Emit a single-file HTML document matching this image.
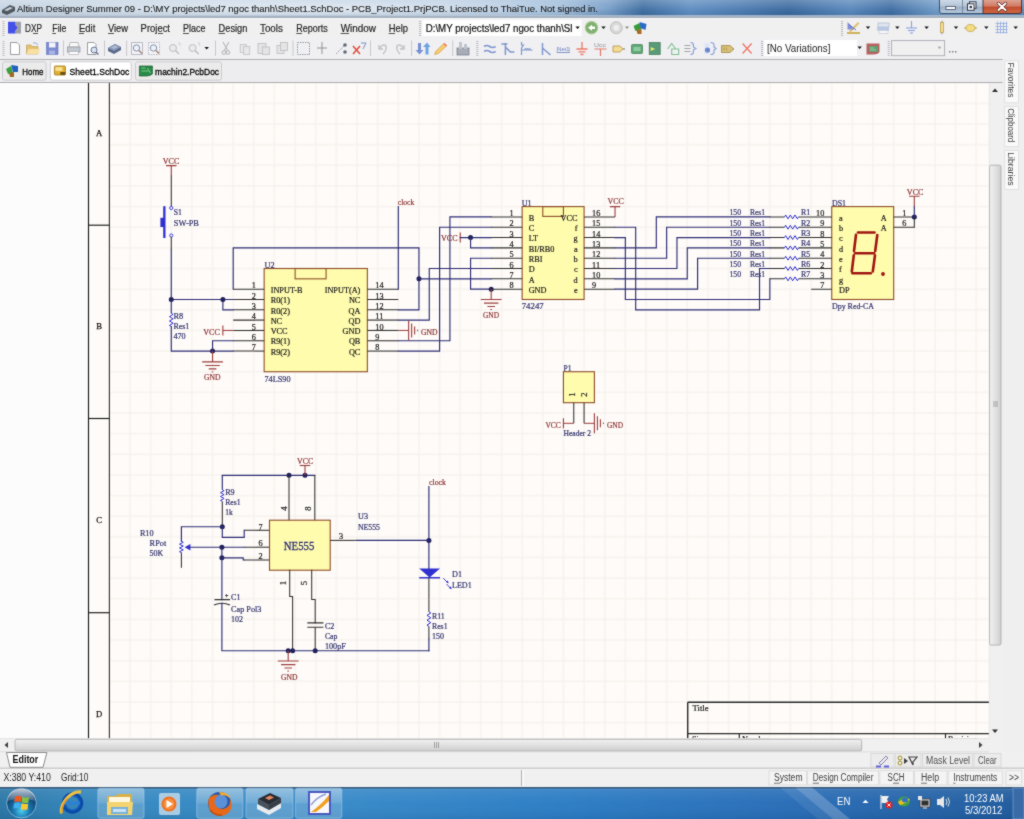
<!DOCTYPE html>
<html><head><meta charset="utf-8"><title>Altium Designer</title>
<style>html,body{margin:0;padding:0;width:1024px;height:819px;overflow:hidden;background:#f0f0f0;font-family:"Liberation Sans",sans-serif;}
svg{display:block;}</style></head>
<body><svg width="1024" height="819" viewBox="0 0 1024 819">
<defs><filter id="fSoft" x="0" y="0" width="1024" height="819" filterUnits="userSpaceOnUse" color-interpolation-filters="sRGB"><feConvolveMatrix order="3" kernelMatrix="1 2 1 2 18 2 1 2 1" divisor="30" edgeMode="duplicate" preserveAlpha="true"/></filter></defs>
<g filter="url(#fSoft)">
<rect x="0" y="0" width="1024" height="819" fill="#f0f0f0"/>
<defs>
<linearGradient id="gTitle" x1="0" y1="0" x2="1" y2="0">
 <stop offset="0" stop-color="#c4d3e2"/>
 <stop offset="0.254" stop-color="#c2d3e4"/>
 <stop offset="0.44" stop-color="#b2c9e0"/>
 <stop offset="0.55" stop-color="#98b8d8"/>
 <stop offset="0.595" stop-color="#6f98c4"/>
 <stop offset="0.628" stop-color="#3a6a9e"/>
 <stop offset="0.674" stop-color="#5a8abf"/>
 <stop offset="0.72" stop-color="#4a7ab0"/>
 <stop offset="0.77" stop-color="#36669c"/>
 <stop offset="0.83" stop-color="#5484b9"/>
 <stop offset="0.87" stop-color="#3a6aa0"/>
 <stop offset="0.913" stop-color="#6a96c4"/>
 <stop offset="1" stop-color="#5a88bb"/>
</linearGradient>
<linearGradient id="gTitleV" x1="0" y1="0" x2="0" y2="1">
 <stop offset="0" stop-color="#ffffff" stop-opacity="0.25"/>
 <stop offset="0.6" stop-color="#ffffff" stop-opacity="0.05"/>
 <stop offset="1" stop-color="#000000" stop-opacity="0.05"/>
</linearGradient>
<radialGradient id="gGlow" cx="0.5" cy="0.5" r="0.5">
 <stop offset="0" stop-color="#e8eef5" stop-opacity="0.9"/>
 <stop offset="1" stop-color="#e8eef5" stop-opacity="0"/>
</radialGradient>
<linearGradient id="gClose" x1="0" y1="0" x2="0" y2="1">
 <stop offset="0" stop-color="#e0a898"/>
 <stop offset="0.5" stop-color="#d07a64"/>
 <stop offset="0.55" stop-color="#c04a2c"/>
 <stop offset="1" stop-color="#d06a48"/>
</linearGradient>
<linearGradient id="gBtn" x1="0" y1="0" x2="0" y2="1">
 <stop offset="0" stop-color="#d0dcea"/>
 <stop offset="0.5" stop-color="#b4c4d6"/>
 <stop offset="0.55" stop-color="#98acc4"/>
 <stop offset="1" stop-color="#b8cce0"/>
</linearGradient>
<linearGradient id="gMenu" x1="0" y1="0" x2="0" y2="1">
 <stop offset="0" stop-color="#f5f5f8"/>
 <stop offset="1" stop-color="#ececf0"/>
</linearGradient>
<linearGradient id="gThumbV" x1="0" y1="0" x2="1" y2="0">
 <stop offset="0" stop-color="#f2f2f2"/>
 <stop offset="0.5" stop-color="#e2e2e2"/>
 <stop offset="1" stop-color="#cfcfcf"/>
</linearGradient>
<linearGradient id="gThumbH" x1="0" y1="0" x2="0" y2="1">
 <stop offset="0" stop-color="#f2f2f2"/>
 <stop offset="0.5" stop-color="#e0e0e0"/>
 <stop offset="1" stop-color="#cdcdcd"/>
</linearGradient>
<linearGradient id="gTask" x1="0" y1="0" x2="1" y2="0">
 <stop offset="0" stop-color="#2a76a6"/>
 <stop offset="0.1" stop-color="#3488c0"/>
 <stop offset="0.33" stop-color="#3689c8"/>
 <stop offset="0.55" stop-color="#2b7cc4"/>
 <stop offset="0.78" stop-color="#286cb6"/>
 <stop offset="1" stop-color="#1f5a9c"/>
</linearGradient>
<linearGradient id="gTaskV" x1="0" y1="0" x2="0" y2="1">
 <stop offset="0" stop-color="#ffffff" stop-opacity="0.10"/>
 <stop offset="0.5" stop-color="#ffffff" stop-opacity="0.02"/>
 <stop offset="1" stop-color="#000000" stop-opacity="0.06"/>
</linearGradient>
<linearGradient id="gTaskBtn" x1="0" y1="0" x2="0" y2="1">
 <stop offset="0" stop-color="#ffffff" stop-opacity="0.42"/>
 <stop offset="0.5" stop-color="#ffffff" stop-opacity="0.26"/>
 <stop offset="0.52" stop-color="#ffffff" stop-opacity="0.18"/>
 <stop offset="1" stop-color="#ffffff" stop-opacity="0.2"/>
</linearGradient>
<radialGradient id="gOrb" cx="0.5" cy="0.75" r="0.6">
 <stop offset="0" stop-color="#50d0f0"/>
 <stop offset="0.45" stop-color="#1a78b0"/>
 <stop offset="1" stop-color="#0e3a68"/>
</radialGradient>
<linearGradient id="gOrbTop" x1="0" y1="0" x2="0" y2="1">
 <stop offset="0" stop-color="#ffffff" stop-opacity="0.75"/>
 <stop offset="1" stop-color="#ffffff" stop-opacity="0.15"/>
</linearGradient>
<radialGradient id="gIE" cx="0.5" cy="0.5" r="0.5">
 <stop offset="0" stop-color="#a0e8ff"/>
 <stop offset="0.5" stop-color="#2a90e0"/>
 <stop offset="1" stop-color="#0a4aa8"/>
</radialGradient>
<clipPath id="cCanvas"><rect x="109.5" y="83" width="879.5" height="655.5"/></clipPath>
<pattern id="pGrid" x="130" y="103.4" width="20.64" height="20.64" patternUnits="userSpaceOnUse">
 <rect x="0" y="0" width="20.64" height="20.64" fill="#fefbf8"/>
 <rect x="-0.5" y="0" width="1" height="20.64" fill="#f4f0eb"/>
 <rect x="0" y="-0.5" width="20.64" height="1" fill="#f4f0eb"/>
 <rect x="20.14" y="0" width="1" height="20.64" fill="#f4f0eb"/>
 <rect x="0" y="20.14" width="20.64" height="1" fill="#f4f0eb"/>
</pattern>
</defs>
<rect x="0.00" y="0.00" width="1024.00" height="15.50" fill="url(#gTitle)"/>
<rect x="0.00" y="0.00" width="1024.00" height="15.50" fill="url(#gTitleV)"/>
<ellipse cx="310" cy="8.5" rx="310" ry="11" fill="url(#gGlow)"/>
<rect x="0.00" y="15.50" width="1024.00" height="1.20" fill="#a2b4ca"/>
<rect x="0.00" y="16.70" width="1024.00" height="1.10" fill="#7a8898"/>
<rect x="0.00" y="17.80" width="1024.00" height="1.00" fill="#fafcff"/>
<g transform="translate(1,2)"><path d="M1 8 L9 3 L14 5 L14 9 L6 13 L1 11 Z" fill="#505860"/><path d="M3 8 L9 5 L12 6 L6 9 Z" fill="#c8d0d8"/></g>
<text x="17.00" y="12.20" font-size="9.8" fill="#1a1a1a" font-family="'Liberation Sans', sans-serif" textLength="581.00" lengthAdjust="spacingAndGlyphs" stroke="#1a1a1a" stroke-width="0.12">Altium Designer Summer 09 - D:\MY projects\led7 ngoc thanh\Sheet1.SchDoc - PCB_Project1.PrjPCB. Licensed to ThaiTue. Not signed in.</text>
<path d="M939.5 -1 L939.5 11 Q939.5 13.5 942 13.5 L1019 13.5 Q1021.5 13.5 1021.5 11 L1021.5 -1 Z" fill="url(#gBtn)" stroke="#34465e" stroke-width="0.9"/>
<path d="M983 -1 L983 13.5 L1019 13.5 Q1021.5 13.5 1021.5 11 L1021.5 -1 Z" fill="url(#gClose)" stroke="#4a2a28" stroke-width="0.9"/>
<line x1="962.50" y1="0.00" x2="962.50" y2="13.50" stroke="#6a7a90" stroke-width="0.8" />
<rect x="946.00" y="6.50" width="9.50" height="3.00" fill="#ffffff" stroke="#3a4a62" stroke-width="0.8"/>
<rect x="969.50" y="1.80" width="6.50" height="6.50" fill="#ffffff" stroke="#2a3446" stroke-width="1.0"/>
<rect x="967.50" y="3.80" width="6.50" height="6.50" fill="#ffffff" stroke="#2a3446" stroke-width="1.0"/>
<rect x="969.60" y="5.90" width="2.30" height="2.30" fill="#2a3446"/>
<path d="M998.5 3.5 L1005.5 10 M1005.5 3.5 L998.5 10" stroke="#5a2a22" stroke-width="3.4" stroke-linecap="round"/>
<path d="M998.5 3.5 L1005.5 10 M1005.5 3.5 L998.5 10" stroke="#ffffff" stroke-width="2" stroke-linecap="round"/>
<rect x="0.00" y="18.80" width="1024.00" height="19.20" fill="#f0f0f0"/>
<rect x="2.50" y="21.00" width="2.00" height="1.00" fill="#b8b8c0"/>
<rect x="2.50" y="23.00" width="2.00" height="1.00" fill="#b8b8c0"/>
<rect x="2.50" y="25.00" width="2.00" height="1.00" fill="#b8b8c0"/>
<rect x="2.50" y="27.00" width="2.00" height="1.00" fill="#b8b8c0"/>
<rect x="2.50" y="29.00" width="2.00" height="1.00" fill="#b8b8c0"/>
<rect x="2.50" y="31.00" width="2.00" height="1.00" fill="#b8b8c0"/>
<rect x="2.50" y="33.00" width="2.00" height="1.00" fill="#b8b8c0"/>
<rect x="2.50" y="35.00" width="2.00" height="1.00" fill="#b8b8c0"/>
<path d="M8 21.8 L15.6 21.8 L15.6 25 L18 27.7 L15.6 30.4 L15.6 33.6 L8 33.6 Z" fill="#4450e8"/>
<path d="M15.6 21.8 L21 21.8 L21 33.6 L15.6 33.6 L15.6 30.4 L18 27.7 L15.6 25 Z" fill="#a0a0a8"/>
<text x="25.00" y="31.50" font-size="10.2" fill="#1e1e1e" font-family="'Liberation Sans', sans-serif" textLength="17.00" lengthAdjust="spacingAndGlyphs" stroke="#1e1e1e" stroke-width="0.18">DXP</text>
<text x="52.30" y="31.50" font-size="10.2" fill="#1e1e1e" font-family="'Liberation Sans', sans-serif" textLength="14.10" lengthAdjust="spacingAndGlyphs" stroke="#1e1e1e" stroke-width="0.18">File</text>
<text x="79.00" y="31.50" font-size="10.2" fill="#1e1e1e" font-family="'Liberation Sans', sans-serif" textLength="16.30" lengthAdjust="spacingAndGlyphs" stroke="#1e1e1e" stroke-width="0.18">Edit</text>
<text x="108.00" y="31.50" font-size="10.2" fill="#1e1e1e" font-family="'Liberation Sans', sans-serif" textLength="20.00" lengthAdjust="spacingAndGlyphs" stroke="#1e1e1e" stroke-width="0.18">View</text>
<text x="140.60" y="31.50" font-size="10.2" fill="#1e1e1e" font-family="'Liberation Sans', sans-serif" textLength="29.40" lengthAdjust="spacingAndGlyphs" stroke="#1e1e1e" stroke-width="0.18">Project</text>
<text x="183.00" y="31.50" font-size="10.2" fill="#1e1e1e" font-family="'Liberation Sans', sans-serif" textLength="22.40" lengthAdjust="spacingAndGlyphs" stroke="#1e1e1e" stroke-width="0.18">Place</text>
<text x="218.60" y="31.50" font-size="10.2" fill="#1e1e1e" font-family="'Liberation Sans', sans-serif" textLength="28.70" lengthAdjust="spacingAndGlyphs" stroke="#1e1e1e" stroke-width="0.18">Design</text>
<text x="260.00" y="31.50" font-size="10.2" fill="#1e1e1e" font-family="'Liberation Sans', sans-serif" textLength="22.80" lengthAdjust="spacingAndGlyphs" stroke="#1e1e1e" stroke-width="0.18">Tools</text>
<text x="296.30" y="31.50" font-size="10.2" fill="#1e1e1e" font-family="'Liberation Sans', sans-serif" textLength="31.50" lengthAdjust="spacingAndGlyphs" stroke="#1e1e1e" stroke-width="0.18">Reports</text>
<text x="340.70" y="31.50" font-size="10.2" fill="#1e1e1e" font-family="'Liberation Sans', sans-serif" textLength="35.30" lengthAdjust="spacingAndGlyphs" stroke="#1e1e1e" stroke-width="0.18">Window</text>
<text x="388.70" y="31.50" font-size="10.2" fill="#1e1e1e" font-family="'Liberation Sans', sans-serif" textLength="19.30" lengthAdjust="spacingAndGlyphs" stroke="#1e1e1e" stroke-width="0.18">Help</text>
<line x1="33.00" y1="33.50" x2="38.00" y2="33.50" stroke="#2a2a2a" stroke-width="0.8" />
<line x1="52.30" y1="33.50" x2="56.00" y2="33.50" stroke="#2a2a2a" stroke-width="0.8" />
<line x1="79.00" y1="33.50" x2="84.00" y2="33.50" stroke="#2a2a2a" stroke-width="0.8" />
<line x1="108.00" y1="33.50" x2="114.00" y2="33.50" stroke="#2a2a2a" stroke-width="0.8" />
<line x1="158.00" y1="33.50" x2="163.00" y2="33.50" stroke="#2a2a2a" stroke-width="0.8" />
<line x1="183.00" y1="33.50" x2="189.00" y2="33.50" stroke="#2a2a2a" stroke-width="0.8" />
<line x1="218.60" y1="33.50" x2="225.00" y2="33.50" stroke="#2a2a2a" stroke-width="0.8" />
<line x1="260.00" y1="33.50" x2="265.00" y2="33.50" stroke="#2a2a2a" stroke-width="0.8" />
<line x1="296.30" y1="33.50" x2="302.00" y2="33.50" stroke="#2a2a2a" stroke-width="0.8" />
<line x1="340.70" y1="33.50" x2="349.00" y2="33.50" stroke="#2a2a2a" stroke-width="0.8" />
<line x1="388.70" y1="33.50" x2="395.00" y2="33.50" stroke="#2a2a2a" stroke-width="0.8" />
<rect x="419.00" y="21.00" width="2.00" height="1.00" fill="#b8b8c0"/>
<rect x="419.00" y="23.00" width="2.00" height="1.00" fill="#b8b8c0"/>
<rect x="419.00" y="25.00" width="2.00" height="1.00" fill="#b8b8c0"/>
<rect x="419.00" y="27.00" width="2.00" height="1.00" fill="#b8b8c0"/>
<rect x="419.00" y="29.00" width="2.00" height="1.00" fill="#b8b8c0"/>
<rect x="419.00" y="31.00" width="2.00" height="1.00" fill="#b8b8c0"/>
<rect x="419.00" y="33.00" width="2.00" height="1.00" fill="#b8b8c0"/>
<rect x="419.00" y="35.00" width="2.00" height="1.00" fill="#b8b8c0"/>
<rect x="422.50" y="20.00" width="159.00" height="16.00" fill="#ffffff"/>
<text x="425.70" y="31.50" font-size="10.2" fill="#101010" font-family="'Liberation Sans', sans-serif" textLength="146.80" lengthAdjust="spacingAndGlyphs" stroke="#101010" stroke-width="0.2">D:\MY projects\led7 ngoc thanh\Sl</text>
<path d="M575.4 26.4 L579.8 26.4 L577.6 28.9 Z" fill="#101010"/>
<circle cx="591.5" cy="27.7" r="6.3" fill="#80b070" stroke="#b0d0a0" stroke-width="1"/>
<path d="M588 27.7 L592 24.7 L592 26.5 L595 26.5 L595 29 L592 29 L592 30.7 Z" fill="#ffffff"/>
<path d="M601.3 26.4 L605.7 26.4 L603.5 28.9 Z" fill="#101010"/>
<circle cx="616.3" cy="27.7" r="6" fill="#d8d8d8" stroke="#c0c0c0" stroke-width="1"/>
<circle cx="616.3" cy="27.7" r="3" fill="#eeeeee"/>
<path d="M624.8 26.4 L629.2 26.4 L627.0 28.9 Z" fill="#909090"/>
<g transform="translate(633.5,21)"><path d="M0 5 L6 2 L8 8 L2 10 Z" fill="#3a9a3a"/><path d="M6 1 L13 3 L12 9 L7 7 Z" fill="#2a6ac8"/><path d="M3 9 L8 8 L8 13 L4 13 Z" fill="#a86a20"/></g>
<rect x="841.00" y="21.00" width="2.00" height="1.00" fill="#b8b8c0"/>
<rect x="841.00" y="23.00" width="2.00" height="1.00" fill="#b8b8c0"/>
<rect x="841.00" y="25.00" width="2.00" height="1.00" fill="#b8b8c0"/>
<rect x="841.00" y="27.00" width="2.00" height="1.00" fill="#b8b8c0"/>
<rect x="841.00" y="29.00" width="2.00" height="1.00" fill="#b8b8c0"/>
<rect x="841.00" y="31.00" width="2.00" height="1.00" fill="#b8b8c0"/>
<rect x="841.00" y="33.00" width="2.00" height="1.00" fill="#b8b8c0"/>
<rect x="841.00" y="35.00" width="2.00" height="1.00" fill="#b8b8c0"/>
<g transform="translate(847,21)"><path d="M0 11 L13 11 L13 13 L0 13 Z" fill="#d0b060"/><path d="M2 10 L11 1 L12.5 2.5 L3.5 11.5 Z" fill="#e0c070"/><path d="M0.5 1 L7 8.5 L0.5 8.5 Z" fill="#8090d8"/><path d="M1.5 3 L9 9" stroke="#6070c0" stroke-width="1"/></g>
<path d="M865.8 26.4 L870.2 26.4 L868.0 28.9 Z" fill="#101010"/>
<g transform="translate(877,21)"><rect x="1" y="2" width="11" height="4" fill="#e0e6f0" stroke="#a0acc8" stroke-width="0.6"/><rect x="0" y="6" width="12" height="3.5" fill="#b8c8e4"/><rect x="2" y="9.5" width="9" height="3" fill="#f8f8f8" stroke="#b0b8c8" stroke-width="0.5"/></g>
<path d="M895.1 26.4 L899.5 26.4 L897.3 28.9 Z" fill="#101010"/>
<g transform="translate(905,20)" stroke="#8aa2dc" stroke-width="1.1"><path d="M6.5 1 L6.5 8"/><path d="M1 8 L12 8"/><path d="M3 10.5 L10 10.5"/><path d="M5 13 L8 13"/></g>
<path d="M924.4 26.4 L928.8 26.4 L926.6 28.9 Z" fill="#101010"/>
<g transform="translate(939,20)"><rect x="1.5" y="2.5" width="3" height="10" fill="#f4dc90" stroke="#c0a050" stroke-width="0.8"/><path d="M3 0.5 L3 2.5 M3 12.5 L3 14.5" stroke="#808080" stroke-width="0.8"/></g>
<path d="M953.8 26.4 L958.2 26.4 L956.0 28.9 Z" fill="#101010"/>
<g transform="translate(964,21)"><path d="M0 7 L13 7" stroke="#c0a050" stroke-width="1"/><ellipse cx="6.5" cy="7" rx="4.5" ry="3.5" fill="#f4dc80" stroke="#c0a050" stroke-width="0.8"/></g>
<path d="M984.1 26.4 L988.5 26.4 L986.3 28.9 Z" fill="#101010"/>
<g transform="translate(995,21)" stroke="#9ab0e0" stroke-width="0.9"><path d="M2.5 0.5 L2.5 12.5 M5.5 0.5 L5.5 12.5 M8.5 0.5 L8.5 12.5 M11.5 0.5 L11.5 12.5 M0.5 2.5 L12.5 2.5 M0.5 5.5 L12.5 5.5 M0.5 8.5 L12.5 8.5 M0.5 11.5 L12.5 11.5"/></g>
<path d="M1013.5 26.4 L1017.9 26.4 L1015.7 28.9 Z" fill="#101010"/>
<rect x="0.00" y="38.00" width="1024.00" height="21.00" fill="#f0f0f3"/>
<line x1="0.00" y1="59.50" x2="1003.00" y2="59.50" stroke="#b0b0b4" stroke-width="1" />
<rect x="2.50" y="41.00" width="2.00" height="1.00" fill="#b8b8c0"/>
<rect x="2.50" y="43.00" width="2.00" height="1.00" fill="#b8b8c0"/>
<rect x="2.50" y="45.00" width="2.00" height="1.00" fill="#b8b8c0"/>
<rect x="2.50" y="47.00" width="2.00" height="1.00" fill="#b8b8c0"/>
<rect x="2.50" y="49.00" width="2.00" height="1.00" fill="#b8b8c0"/>
<rect x="2.50" y="51.00" width="2.00" height="1.00" fill="#b8b8c0"/>
<rect x="2.50" y="53.00" width="2.00" height="1.00" fill="#b8b8c0"/>
<rect x="2.50" y="55.00" width="2.00" height="1.00" fill="#b8b8c0"/>
<g transform="translate(10,42)"><path d="M0.5 0.5 L7 0.5 L9.5 3 L9.5 12.5 L0.5 12.5 Z" fill="#ffffff" stroke="#909098" stroke-width="0.9"/></g>
<g transform="translate(26,42)"><path d="M0.5 3 L5 3 L6 4.5 L12 4.5 L12 12 L0.5 12 Z" fill="#e4c070" stroke="#c09850" stroke-width="0.6"/><path d="M2.5 7 L14 7 L12 12 L0.5 12 Z" fill="#f8e0a0"/><path d="M7 1 Q11 0 12 3" stroke="#80a0c0" stroke-width="0.8" fill="none"/></g>
<g transform="translate(46,42)"><rect x="0.5" y="0.5" width="11.5" height="12" fill="#7c8ad0" stroke="#6070b8" stroke-width="0.6"/><rect x="3" y="0.5" width="6.5" height="5" fill="#f4f4fa"/><rect x="3" y="8.5" width="6" height="4" fill="#a8b4e4"/></g>
<line x1="63.50" y1="40.50" x2="63.50" y2="56.00" stroke="#c8c8cc" stroke-width="1" />
<g transform="translate(67,42)"><path d="M3 0.5 L11 0.5 L12 5 L2 5 Z" fill="#fafafa" stroke="#a0a0a8" stroke-width="0.7"/><rect x="0.5" y="5" width="12.5" height="5" fill="#c4c8d0" stroke="#90949c" stroke-width="0.7"/><rect x="2" y="9.5" width="9.5" height="3" fill="#ffffff" stroke="#a0a0a8" stroke-width="0.6"/></g>
<g transform="translate(87,42)"><path d="M0.5 0.5 L7 0.5 L9 2.5 L9 12.5 L0.5 12.5 Z" fill="#ffffff" stroke="#909098" stroke-width="0.9"/><circle cx="7" cy="8" r="3" fill="#d8e4f4" stroke="#6a7890" stroke-width="1"/><path d="M9 10 L11.5 12.5" stroke="#6a7890" stroke-width="1.5"/></g>
<line x1="104.50" y1="40.50" x2="104.50" y2="56.00" stroke="#c8c8cc" stroke-width="1" />
<g transform="translate(108,42)"><path d="M0 6 L7 2 L13 5 L13 8 L6 12 L0 9 Z" fill="#5a6a88"/><path d="M0 6 L7 2 L13 5 L6 9 Z" fill="#8a9ab8"/><path d="M3 5.5 L7 3.5 L10 5 L6 7 Z" fill="#b0bcd4"/></g>
<line x1="126.60" y1="40.50" x2="126.60" y2="56.00" stroke="#c8c8cc" stroke-width="1" />
<g transform="translate(131,42)"><rect x="0.5" y="0.5" width="11" height="12" fill="#f4f4f8" stroke="#a8a8b4" stroke-width="0.8" stroke-dasharray="20,0"/><circle cx="5.5" cy="6" r="3.2" fill="#eef2f8" stroke="#8090a8" stroke-width="1"/><path d="M8 8.5 L11 11.5" stroke="#a08068" stroke-width="1.4"/></g>
<g transform="translate(148,42)"><rect x="0.5" y="0.5" width="11" height="12" fill="#f4f4f8" stroke="#a8a8b4" stroke-width="0.8" stroke-dasharray="1.5,1"/><circle cx="5.5" cy="6" r="3.2" fill="#eef2f8" stroke="#8090a8" stroke-width="1"/><path d="M8 8.5 L11 11.5" stroke="#a08068" stroke-width="1.4"/></g>
<g transform="translate(168,42)" opacity="0.6"><circle cx="5" cy="6" r="3.5" fill="#e8e8e8" stroke="#9a9aa0" stroke-width="1"/><path d="M7.5 8.5 L11 12" stroke="#a0a0a0" stroke-width="1.6"/><path d="M10 1 L12 1 L12 4" stroke="#b0b0b0" stroke-width="0.8" fill="none"/></g>
<g transform="translate(187.6,42)" opacity="0.6"><circle cx="5" cy="6" r="3.5" fill="#e8e8e8" stroke="#9a9aa0" stroke-width="1"/><path d="M7.5 8.5 L11 12" stroke="#a0a0a0" stroke-width="1.6"/><path d="M10 1 L12 1 L12 4" stroke="#b0b0b0" stroke-width="0.8" fill="none"/></g>
<path d="M204.5 46.9 L208.9 46.9 L206.7 49.4 Z" fill="#101010"/>
<line x1="215.50" y1="40.50" x2="215.50" y2="56.00" stroke="#c8c8cc" stroke-width="1" />
<g transform="translate(222,42)" stroke="#b8b8b8" stroke-width="1.1" fill="none"><path d="M1 0 L6 9 M7 0 L2 9"/><circle cx="2" cy="10.5" r="1.8"/><circle cx="6" cy="10.5" r="1.8"/></g>
<g transform="translate(239.7,42)" fill="#e8e8e8" stroke="#c0c0c0" stroke-width="0.8"><rect x="0.5" y="2.5" width="6" height="8"/><rect x="4" y="4.5" width="6" height="8"/></g>
<g transform="translate(257.5,42)" fill="#e4e4e4" stroke="#bcbcbc" stroke-width="0.8"><rect x="0.5" y="1.5" width="8" height="10"/><rect x="5" y="5" width="7" height="7.5"/></g>
<g transform="translate(276.5,42)" fill="#e4e4e4" stroke="#bcbcbc" stroke-width="0.8"><rect x="0.5" y="3.5" width="7" height="8"/><rect x="4" y="0.5" width="7" height="8"/></g>
<line x1="293.00" y1="40.50" x2="293.00" y2="56.00" stroke="#c8c8cc" stroke-width="1" />
<g transform="translate(297,42)"><rect x="0.5" y="0.5" width="12" height="12" fill="none" stroke="#8890a0" stroke-width="0.9" stroke-dasharray="1.5,1"/></g>
<g transform="translate(317,42)" stroke="#909098" stroke-width="1"><path d="M5 0 L5 12 M0 6 L10 6"/></g>
<g transform="translate(336,42)"><path d="M0 12 L8 4" stroke="#9098a8" stroke-width="1" stroke-dasharray="1.5,1"/><circle cx="9" cy="3" r="1.8" fill="#606878"/><circle cx="9" cy="10" r="1.8" fill="#606878"/></g>
<g transform="translate(353,42)"><path d="M0 4 L7 12 M7 4 L0 12" stroke="#e05040" stroke-width="1.6"/><path d="M8 1 L13 1 L10 7" stroke="#7a90c0" stroke-width="1" fill="none"/></g>
<line x1="370.50" y1="40.50" x2="370.50" y2="56.00" stroke="#c8c8cc" stroke-width="1" />
<g transform="translate(377,42)" stroke="#c0c0c8" stroke-width="1.4" fill="none"><path d="M2 3 L2 7 L6 7"/><path d="M2.5 6.5 Q6 1 9 4 Q10 8 6 12"/></g>
<g transform="translate(396,42)" stroke="#c0c0c8" stroke-width="1.4" fill="none"><path d="M8 3 L8 7 L4 7"/><path d="M7.5 6.5 Q4 1 1 4 Q0 8 4 12"/></g>
<line x1="411.60" y1="40.50" x2="411.60" y2="56.00" stroke="#c8c8cc" stroke-width="1" />
<g transform="translate(415,42)"><path d="M3 1 L3 8 L0.5 8 L4.5 12.5 L8.5 8 L6 8 L6 1 Z" fill="#7890d4"/><path d="M10.5 12.5 L10.5 5 L8 5 L12 0.5 L15.5 5 L13.5 5 L13.5 12.5 Z" fill="#6aa4e4"/></g>
<g transform="translate(434,42)"><path d="M0.5 12.5 L2 9 L10 1.5 L12.5 4 L4.5 11.5 Z" fill="#f4cc70" stroke="#d09040" stroke-width="0.6"/><path d="M10 1.5 L12.5 4" stroke="#f07050" stroke-width="1.4"/></g>
<line x1="452.70" y1="40.50" x2="452.70" y2="56.00" stroke="#c8c8cc" stroke-width="1" />
<g transform="translate(457,42)"><rect x="0" y="6" width="12" height="7" fill="#a8acb8" stroke="#70747c" stroke-width="0.7"/><rect x="2" y="0" width="3" height="7" fill="#c0c4cc"/><rect x="7" y="2" width="3" height="5" fill="#c0c4cc"/></g>
<rect x="476.30" y="41.00" width="2.00" height="1.00" fill="#b8b8c0"/>
<rect x="476.30" y="43.00" width="2.00" height="1.00" fill="#b8b8c0"/>
<rect x="476.30" y="45.00" width="2.00" height="1.00" fill="#b8b8c0"/>
<rect x="476.30" y="47.00" width="2.00" height="1.00" fill="#b8b8c0"/>
<rect x="476.30" y="49.00" width="2.00" height="1.00" fill="#b8b8c0"/>
<rect x="476.30" y="51.00" width="2.00" height="1.00" fill="#b8b8c0"/>
<rect x="476.30" y="53.00" width="2.00" height="1.00" fill="#b8b8c0"/>
<rect x="476.30" y="55.00" width="2.00" height="1.00" fill="#b8b8c0"/>
<g transform="translate(483.6,42)" stroke="#7f96cc" stroke-width="1.7" fill="none"><path d="M0.5 4.5 Q3 2.5 6 4.5 Q9 6.5 12 4.5"/><path d="M0.5 9.5 Q3 7.5 6 9.5 Q9 11.5 12 9.5"/></g>
<g transform="translate(501.4,42)" stroke="#7f96cc" stroke-width="1.5" fill="none"><path d="M0 2 L6 2 M4 1 L4 13 M4 5 L9 10 L13 10"/></g>
<g transform="translate(520.5,42)" stroke="#7f96cc" stroke-width="1.2" fill="none"><path d="M1 0 L1 3 L3 3 L1 6 L1 13 M1 8 L12 8"/><path d="M4 8 L5 6 L6 8 L7 6 L8 8 L9 6 L10 8" stroke-width="0.9"/></g>
<g transform="translate(539.5,42)" stroke="#7f96cc" stroke-width="1.5" fill="none"><path d="M3 1 L3 13 M3 6 L11 13"/></g>
<g transform="translate(556.8,42)"><text x="0.5" y="8.5" font-size="6" font-family="'Liberation Sans', sans-serif" fill="#6a7cc0" textLength="12" lengthAdjust="spacingAndGlyphs">Net1</text><path d="M0 10.5 L13 10.5" stroke="#7f96cc" stroke-width="1"/><path d="M0.5 5 L0.5 10.5 M12.5 5 L12.5 10.5" stroke="#7f96cc" stroke-width="0.6"/></g>
<g transform="translate(576,42)" stroke="#ee7766" stroke-width="1.3"><path d="M6 0 L6 7 M0.5 7 L11.5 7 M2.5 9.8 L9.5 9.8 M4.5 12.5 L7.5 12.5"/></g>
<g transform="translate(594,41)"><text x="0" y="5.5" font-size="6" font-family="'Liberation Sans', sans-serif" fill="#909090" textLength="12" lengthAdjust="spacingAndGlyphs">Ucc</text><path d="M0.5 8 L12.5 8 M6.5 8 L6.5 15" stroke="#e07868" stroke-width="1.2"/></g>
<g transform="translate(612,42)"><path d="M1 4 L8 4 L11 7 L8 10 L1 10 Z" fill="#f4dc90" stroke="#b09050" stroke-width="0.8"/><path d="M11 7 L13 7" stroke="#707070" stroke-width="1"/></g>
<g transform="translate(631,42)"><rect x="0.5" y="2.5" width="11" height="9" rx="1" fill="#62a878" stroke="#3a7a50" stroke-width="0.7"/><rect x="2.5" y="5" width="7" height="4" fill="#8ccca0"/></g>
<g transform="translate(648.7,42)"><rect x="0.5" y="0.5" width="11" height="12" fill="#5a9a78" stroke="#3a7a50" stroke-width="0.7"/><path d="M2 5 L6.5 7 L2 9 Z" fill="#e8e870"/></g>
<g transform="translate(666.7,42)" stroke="#80c090" stroke-width="1.1" fill="none"><path d="M1 7 L5 1.5 L9 7 M5 7 L12 7 L12 12.5 L5 12.5 Z"/></g>
<g transform="translate(684.4,42)" stroke="#8aa0d8" stroke-width="1.2" fill="none"><path d="M6 0.5 Q9 0.5 9 3 L9 5 L11.5 6.5 L9 8 L9 10 Q9 12.5 6 12.5"/><path d="M0 3.5 L6 3.5 M0 6.5 L6 6.5 M0 9.5 L6 9.5" stroke="#909090" stroke-width="0.8"/></g>
<g transform="translate(703.5,42)"><path d="M7 0.5 Q10.5 0.5 10.5 3 L10.5 5 L12.5 6.5 L10.5 8 L10.5 10 Q10.5 12.5 7 12.5" stroke="#8aa0d8" stroke-width="1.2" fill="none"/><path d="M1 1 L6 1 L6 12 L1 12 Z" fill="#dde6f6"/><circle cx="4" cy="8" r="2.6" fill="#6a88d0"/></g>
<g transform="translate(721,42)"><path d="M0.5 3.5 L9 3.5 L13 7 L9 10.5 L0.5 10.5 Z" fill="#d8c078" stroke="#a08840" stroke-width="0.8"/><path d="M3 5.5 L3 8.5 M5 5.5 L6 8.5" stroke="#a08840" stroke-width="0.7"/></g>
<g transform="translate(741.6,42)" stroke="#f07060" stroke-width="1.2"><path d="M1 1.5 L10 11.5 M10 1.5 L1 11.5"/></g>
<rect x="761.00" y="41.00" width="2.00" height="1.00" fill="#b8b8c0"/>
<rect x="761.00" y="43.00" width="2.00" height="1.00" fill="#b8b8c0"/>
<rect x="761.00" y="45.00" width="2.00" height="1.00" fill="#b8b8c0"/>
<rect x="761.00" y="47.00" width="2.00" height="1.00" fill="#b8b8c0"/>
<rect x="761.00" y="49.00" width="2.00" height="1.00" fill="#b8b8c0"/>
<rect x="761.00" y="51.00" width="2.00" height="1.00" fill="#b8b8c0"/>
<rect x="761.00" y="53.00" width="2.00" height="1.00" fill="#b8b8c0"/>
<rect x="761.00" y="55.00" width="2.00" height="1.00" fill="#b8b8c0"/>
<rect x="764.40" y="40.00" width="92.60" height="16.00" fill="#ffffff"/>
<text x="767.00" y="52.00" font-size="10.2" fill="#1e1e1e" font-family="'Liberation Sans', sans-serif" textLength="63.40" lengthAdjust="spacingAndGlyphs">[No Variations]</text>
<path d="M857.5 46.4 L861.9 46.4 L859.7 48.9 Z" fill="#101010"/>
<g transform="translate(866,42)"><path d="M0.5 1.5 L13.5 1.5 L13.5 10 Q12 12.5 7 12.5 L0.5 12.5 Z" fill="#b86060"/><path d="M3 4 L12 4 L12 10 L3 10 Z" fill="#60a070"/><path d="M4 6 L8 6 M4 8 L10 8" stroke="#c0e0c0" stroke-width="0.6"/></g>
<rect x="887.70" y="41.00" width="2.00" height="1.00" fill="#b8b8c0"/>
<rect x="887.70" y="43.00" width="2.00" height="1.00" fill="#b8b8c0"/>
<rect x="887.70" y="45.00" width="2.00" height="1.00" fill="#b8b8c0"/>
<rect x="887.70" y="47.00" width="2.00" height="1.00" fill="#b8b8c0"/>
<rect x="887.70" y="49.00" width="2.00" height="1.00" fill="#b8b8c0"/>
<rect x="887.70" y="51.00" width="2.00" height="1.00" fill="#b8b8c0"/>
<rect x="887.70" y="53.00" width="2.00" height="1.00" fill="#b8b8c0"/>
<rect x="887.70" y="55.00" width="2.00" height="1.00" fill="#b8b8c0"/>
<rect x="891.60" y="40.60" width="53.00" height="15.10" fill="#f0f0f0" stroke="#a8a8b0" stroke-width="0.9"/>
<path d="M937.5 46.8 L941.5 46.8 L939.5 49.1 Z" fill="#a0a0a0"/>
<rect x="949.00" y="51.00" width="1.50" height="1.50" fill="#808080"/>
<rect x="952.00" y="51.00" width="1.50" height="1.50" fill="#808080"/>
<rect x="955.00" y="51.00" width="1.50" height="1.50" fill="#808080"/>
<rect x="0.00" y="60.00" width="1024.00" height="22.80" fill="#ededf0"/>
<line x1="0.00" y1="82.60" x2="1003.00" y2="82.60" stroke="#a8a8ac" stroke-width="1" />
<rect x="2.5" y="61.8" width="43.5" height="18.4" rx="2" fill="#ebebeb" stroke="#c8c8cc" stroke-width="0.9"/>
<rect x="50.4" y="61.8" width="80.8" height="18.4" rx="2" fill="#ffffff" stroke="#c8c8cc" stroke-width="0.9"/>
<rect x="135.5" y="61.8" width="86.0" height="18.4" rx="2" fill="#ebebeb" stroke="#c8c8cc" stroke-width="0.9"/>
<g transform="translate(6,64)"><path d="M0 5 L5 2 L7 9 L2 10 Z" fill="#3aa040"/><path d="M5 1 L12 2 L12 8 L7 8 Z" fill="#2060c0"/><path d="M3 9 L8 8 L8 13 L4 13 Z" fill="#a06a20"/></g>
<text x="22.30" y="74.50" font-size="9.8" fill="#000000" font-family="'Liberation Sans', sans-serif" textLength="21.10" lengthAdjust="spacingAndGlyphs" stroke="#000" stroke-width="0.28">Home</text>
<g transform="translate(54.4,65)"><rect x="0" y="1" width="11" height="9" rx="1" fill="#e0b030" stroke="#a07818" stroke-width="0.8"/><rect x="1" y="2" width="7" height="4" fill="#f8e090"/><rect x="6" y="7" width="5" height="3" fill="#705010"/></g>
<text x="69.60" y="74.50" font-size="9.8" fill="#000000" font-family="'Liberation Sans', sans-serif" textLength="59.80" lengthAdjust="spacingAndGlyphs" stroke="#000" stroke-width="0.28">Sheet1.SchDoc</text>
<g transform="translate(139.4,65)"><path d="M0 1 L13 1 L13 9 Q11 11 7 11 L0 11 Z" fill="#2a8a48" stroke="#185a30" stroke-width="0.7"/><path d="M2 3 L6 3 M2 6 L9 6 M8 3 L11 8" stroke="#90e0a0" stroke-width="0.8"/></g>
<text x="155.10" y="74.50" font-size="9.8" fill="#000000" font-family="'Liberation Sans', sans-serif" textLength="64.00" lengthAdjust="spacingAndGlyphs" stroke="#000" stroke-width="0.28">machin2.PcbDoc</text>
<rect x="0.00" y="83.00" width="88.50" height="655.50" fill="#fcfcfc"/>
<rect x="88.50" y="83.00" width="21.00" height="655.50" fill="#fefbf8"/>
<rect x="109.50" y="83.00" width="879.50" height="655.50" fill="url(#pGrid)"/>
<line x1="88.50" y1="83.00" x2="88.50" y2="738.50" stroke="#1a1a1a" stroke-width="1.15" />
<line x1="109.40" y1="83.00" x2="109.40" y2="738.50" stroke="#3a3a3a" stroke-width="1.15" />
<line x1="88.50" y1="225.20" x2="109.40" y2="225.20" stroke="#1a1a1a" stroke-width="1.15" />
<line x1="88.50" y1="418.50" x2="109.40" y2="418.50" stroke="#1a1a1a" stroke-width="1.15" />
<line x1="88.50" y1="612.70" x2="109.40" y2="612.70" stroke="#1a1a1a" stroke-width="1.15" />
<text x="99.00" y="135.60" font-size="8.6" fill="#101010" font-family="'Liberation Serif', serif" text-anchor="middle" stroke="#101010" stroke-width="0.25">A</text>
<text x="99.00" y="328.90" font-size="8.6" fill="#101010" font-family="'Liberation Serif', serif" text-anchor="middle" stroke="#101010" stroke-width="0.25">B</text>
<text x="99.00" y="522.60" font-size="8.6" fill="#101010" font-family="'Liberation Serif', serif" text-anchor="middle" stroke="#101010" stroke-width="0.25">C</text>
<text x="99.00" y="716.60" font-size="8.6" fill="#101010" font-family="'Liberation Serif', serif" text-anchor="middle" stroke="#101010" stroke-width="0.25">D</text>
<g clip-path="url(#cCanvas)">
<line x1="166.08" y1="165.60" x2="176.48" y2="165.60" stroke="#9c3c3c" stroke-width="1.1" />
<line x1="171.28" y1="165.60" x2="171.28" y2="175.00" stroke="#9c3c3c" stroke-width="1.1" />
<text x="162.80" y="164.20" font-size="8.64" fill="#8c3434" font-family="'Liberation Serif', serif" textLength="16.50" lengthAdjust="spacingAndGlyphs" stroke="#8c3434" stroke-width="0.22" >VCC</text>
<line x1="171.28" y1="175.00" x2="171.28" y2="206.30" stroke="#303030" stroke-width="1.05" />
<circle cx="171.28" cy="208" r="1.6" fill="none" stroke="#3030d0" stroke-width="0.9"/>
<circle cx="171.28" cy="235.5" r="1.6" fill="none" stroke="#3030d0" stroke-width="0.9"/>
<rect x="163.20" y="206.20" width="2.30" height="31.80" fill="#3030d0"/>
<rect x="160.40" y="217.80" width="4.00" height="9.20" fill="#3030d0"/>
<text x="173.80" y="215.00" font-size="8.64" fill="#34346e" font-family="'Liberation Serif', serif" textLength="8.20" lengthAdjust="spacingAndGlyphs" stroke="#34346e" stroke-width="0.22" >S1</text>
<text x="173.80" y="225.60" font-size="8.64" fill="#34346e" font-family="'Liberation Serif', serif" textLength="25.10" lengthAdjust="spacingAndGlyphs" stroke="#34346e" stroke-width="0.22" >SW-PB</text>
<line x1="171.28" y1="237.10" x2="171.28" y2="250.00" stroke="#303030" stroke-width="1.05" />
<polyline points="171.28,250.00 171.28,299.48" fill="none" stroke="#2c2c74" stroke-width="1.15" stroke-linejoin="miter" stroke-linecap="square"/>
<polyline points="171.28,299.48 233.20,299.48" fill="none" stroke="#2c2c74" stroke-width="1.15" stroke-linejoin="miter" stroke-linecap="square"/>
<circle cx="171.28" cy="299.48" r="2.5" fill="#20205a"/>
<polyline points="222.88,299.48 222.88,309.80 233.20,309.80" fill="none" stroke="#2c2c74" stroke-width="1.15" stroke-linejoin="miter" stroke-linecap="square"/>
<circle cx="222.88" cy="299.48" r="2.5" fill="#20205a"/>
<line x1="171.28" y1="299.48" x2="171.28" y2="313.30" stroke="#2c2c74" stroke-width="1.15" />
<polyline points="171.28,313.30 173.08,314.40 169.48,316.60 173.08,318.80 169.48,321.00 173.08,323.20 169.48,325.40 171.28,326.50" fill="none" stroke="#3030d0" stroke-width="1.0" />
<text x="173.40" y="318.80" font-size="8.64" fill="#34346e" font-family="'Liberation Serif', serif" textLength="9.80" lengthAdjust="spacingAndGlyphs" stroke="#34346e" stroke-width="0.22" >R8</text>
<text x="173.40" y="328.50" font-size="8.64" fill="#34346e" font-family="'Liberation Serif', serif" textLength="15.90" lengthAdjust="spacingAndGlyphs" stroke="#34346e" stroke-width="0.22" >Res1</text>
<text x="173.40" y="338.90" font-size="8.64" fill="#34346e" font-family="'Liberation Serif', serif" textLength="12.20" lengthAdjust="spacingAndGlyphs" stroke="#34346e" stroke-width="0.22" >470</text>
<polyline points="171.28,326.50 171.28,351.08 233.20,351.08" fill="none" stroke="#2c2c74" stroke-width="1.15" stroke-linejoin="miter" stroke-linecap="square"/>
<circle cx="212.56" cy="351.08" r="2.5" fill="#20205a"/>
<polyline points="212.56,351.08 212.56,340.76 233.20,340.76" fill="none" stroke="#2c2c74" stroke-width="1.15" stroke-linejoin="miter" stroke-linecap="square"/>
<line x1="212.56" y1="351.08" x2="212.56" y2="361.90" stroke="#9c3c3c" stroke-width="1.1" />
<line x1="202.16" y1="361.90" x2="222.96" y2="361.90" stroke="#9c3c3c" stroke-width="1.1" />
<line x1="205.36" y1="365.50" x2="219.76" y2="365.50" stroke="#9c3c3c" stroke-width="1.1" />
<line x1="208.76" y1="368.90" x2="216.36" y2="368.90" stroke="#9c3c3c" stroke-width="1.1" />
<line x1="211.76" y1="371.90" x2="213.36" y2="371.90" stroke="#9c3c3c" stroke-width="1.0" />
<text x="204.00" y="380.40" font-size="8.64" fill="#8c3434" font-family="'Liberation Serif', serif" textLength="16.40" lengthAdjust="spacingAndGlyphs" stroke="#8c3434" stroke-width="0.22" >GND</text>
<line x1="222.88" y1="325.44" x2="222.88" y2="335.44" stroke="#9c3c3c" stroke-width="1.1" />
<text x="203.30" y="334.60" font-size="8.64" fill="#8c3434" font-family="'Liberation Serif', serif" textLength="16.50" lengthAdjust="spacingAndGlyphs" stroke="#8c3434" stroke-width="0.22" >VCC</text>
<line x1="222.88" y1="330.44" x2="233.20" y2="330.44" stroke="#9c3c3c" stroke-width="1.0" />
<polyline points="233.20,289.16 233.20,247.88 418.96,247.88 418.96,309.80 398.32,309.80" fill="none" stroke="#2c2c74" stroke-width="1.15" stroke-linejoin="miter" stroke-linecap="square"/>
<circle cx="418.96" cy="278.84" r="2.5" fill="#20205a"/>
<polyline points="418.96,278.84 491.20,278.84" fill="none" stroke="#2c2c74" stroke-width="1.15" stroke-linejoin="miter" stroke-linecap="square"/>
<polyline points="398.32,289.16 398.32,206.60" fill="none" stroke="#2c2c74" stroke-width="1.15" stroke-linejoin="miter" stroke-linecap="square"/>
<text x="397.80" y="205.30" font-size="8.64" fill="#8c3434" font-family="'Liberation Serif', serif" textLength="16.50" lengthAdjust="spacingAndGlyphs" stroke="#8c3434" stroke-width="0.22" >clock</text>
<polyline points="398.32,320.12 429.28,320.12 429.28,268.52 491.20,268.52" fill="none" stroke="#2c2c74" stroke-width="1.15" stroke-linejoin="miter" stroke-linecap="square"/>
<polyline points="398.32,340.76 449.92,340.76 449.92,216.92 491.20,216.92" fill="none" stroke="#2c2c74" stroke-width="1.15" stroke-linejoin="miter" stroke-linecap="square"/>
<polyline points="398.32,351.08 439.60,351.08 439.60,227.24 491.20,227.24" fill="none" stroke="#2c2c74" stroke-width="1.15" stroke-linejoin="miter" stroke-linecap="square"/>
<line x1="398.32" y1="330.44" x2="408.64" y2="330.44" stroke="#9c3c3c" stroke-width="1.0" />
<line x1="408.64" y1="320.44" x2="408.64" y2="340.44" stroke="#9c3c3c" stroke-width="1.1" />
<line x1="411.64" y1="323.44" x2="411.64" y2="337.44" stroke="#9c3c3c" stroke-width="1.1" />
<line x1="414.64" y1="326.44" x2="414.64" y2="334.44" stroke="#9c3c3c" stroke-width="1.1" />
<line x1="417.64" y1="329.64" x2="417.64" y2="331.24" stroke="#9c3c3c" stroke-width="1.0" />
<text x="421.00" y="334.80" font-size="8.64" fill="#8c3434" font-family="'Liberation Serif', serif" textLength="16.50" lengthAdjust="spacingAndGlyphs" stroke="#8c3434" stroke-width="0.22" >GND</text>
<rect x="264.16" y="268.52" width="103.20" height="103.20" fill="#fffcae" stroke="#8e4c2a" stroke-width="1.1"/>
<rect x="295.12" y="268.52" width="30.96" height="10.32" fill="none" stroke="#8e4c2a" stroke-width="1.1"/>
<text x="264.50" y="267.80" font-size="8.64" fill="#34346e" font-family="'Liberation Serif', serif" textLength="10.00" lengthAdjust="spacingAndGlyphs" stroke="#34346e" stroke-width="0.22" >U2</text>
<text x="264.50" y="381.80" font-size="8.64" fill="#34346e" font-family="'Liberation Serif', serif" textLength="26.00" lengthAdjust="spacingAndGlyphs" stroke="#34346e" stroke-width="0.22" >74LS90</text>
<line x1="233.20" y1="289.16" x2="264.16" y2="289.16" stroke="#303030" stroke-width="1.05" />
<line x1="367.36" y1="289.16" x2="398.32" y2="289.16" stroke="#303030" stroke-width="1.05" />
<text x="0.00" y="0.00" font-size="8.64" fill="#1c1c1c" font-family="'Liberation Serif', serif" text-anchor="end" stroke="#1c1c1c" stroke-width="0.22"  transform="translate(255.86,288.36) scale(0.955,1)">1</text>
<text x="0.00" y="0.00" font-size="8.64" fill="#1c1c1c" font-family="'Liberation Serif', serif" stroke="#1c1c1c" stroke-width="0.22"  transform="translate(375.36,288.36) scale(0.955,1)">14</text>
<text x="0.00" y="0.00" font-size="8.64" fill="#1c1c1c" font-family="'Liberation Serif', serif" stroke="#1c1c1c" stroke-width="0.22"  transform="translate(270.66,292.86) scale(0.955,1)">INPUT-B</text>
<text x="0.00" y="0.00" font-size="8.64" fill="#1c1c1c" font-family="'Liberation Serif', serif" text-anchor="end" stroke="#1c1c1c" stroke-width="0.22"  transform="translate(360.36,292.86) scale(0.955,1)">INPUT(A)</text>
<line x1="233.20" y1="299.48" x2="264.16" y2="299.48" stroke="#303030" stroke-width="1.05" />
<line x1="367.36" y1="299.48" x2="398.32" y2="299.48" stroke="#303030" stroke-width="1.05" />
<text x="0.00" y="0.00" font-size="8.64" fill="#1c1c1c" font-family="'Liberation Serif', serif" text-anchor="end" stroke="#1c1c1c" stroke-width="0.22"  transform="translate(255.86,298.68) scale(0.955,1)">2</text>
<text x="0.00" y="0.00" font-size="8.64" fill="#1c1c1c" font-family="'Liberation Serif', serif" stroke="#1c1c1c" stroke-width="0.22"  transform="translate(375.36,298.68) scale(0.955,1)">13</text>
<text x="0.00" y="0.00" font-size="8.64" fill="#1c1c1c" font-family="'Liberation Serif', serif" stroke="#1c1c1c" stroke-width="0.22"  transform="translate(270.66,303.18) scale(0.955,1)">R0(1)</text>
<text x="0.00" y="0.00" font-size="8.64" fill="#1c1c1c" font-family="'Liberation Serif', serif" text-anchor="end" stroke="#1c1c1c" stroke-width="0.22"  transform="translate(360.36,303.18) scale(0.955,1)">NC</text>
<line x1="233.20" y1="309.80" x2="264.16" y2="309.80" stroke="#303030" stroke-width="1.05" />
<line x1="367.36" y1="309.80" x2="398.32" y2="309.80" stroke="#303030" stroke-width="1.05" />
<text x="0.00" y="0.00" font-size="8.64" fill="#1c1c1c" font-family="'Liberation Serif', serif" text-anchor="end" stroke="#1c1c1c" stroke-width="0.22"  transform="translate(255.86,309.00) scale(0.955,1)">3</text>
<text x="0.00" y="0.00" font-size="8.64" fill="#1c1c1c" font-family="'Liberation Serif', serif" stroke="#1c1c1c" stroke-width="0.22"  transform="translate(375.36,309.00) scale(0.955,1)">12</text>
<text x="0.00" y="0.00" font-size="8.64" fill="#1c1c1c" font-family="'Liberation Serif', serif" stroke="#1c1c1c" stroke-width="0.22"  transform="translate(270.66,313.50) scale(0.955,1)">R0(2)</text>
<text x="0.00" y="0.00" font-size="8.64" fill="#1c1c1c" font-family="'Liberation Serif', serif" text-anchor="end" stroke="#1c1c1c" stroke-width="0.22"  transform="translate(360.36,313.50) scale(0.955,1)">QA</text>
<line x1="233.20" y1="320.12" x2="264.16" y2="320.12" stroke="#303030" stroke-width="1.05" />
<line x1="367.36" y1="320.12" x2="398.32" y2="320.12" stroke="#303030" stroke-width="1.05" />
<text x="0.00" y="0.00" font-size="8.64" fill="#1c1c1c" font-family="'Liberation Serif', serif" text-anchor="end" stroke="#1c1c1c" stroke-width="0.22"  transform="translate(255.86,319.32) scale(0.955,1)">4</text>
<text x="0.00" y="0.00" font-size="8.64" fill="#1c1c1c" font-family="'Liberation Serif', serif" stroke="#1c1c1c" stroke-width="0.22"  transform="translate(375.36,319.32) scale(0.955,1)">11</text>
<text x="0.00" y="0.00" font-size="8.64" fill="#1c1c1c" font-family="'Liberation Serif', serif" stroke="#1c1c1c" stroke-width="0.22"  transform="translate(270.66,323.82) scale(0.955,1)">NC</text>
<text x="0.00" y="0.00" font-size="8.64" fill="#1c1c1c" font-family="'Liberation Serif', serif" text-anchor="end" stroke="#1c1c1c" stroke-width="0.22"  transform="translate(360.36,323.82) scale(0.955,1)">QD</text>
<line x1="233.20" y1="330.44" x2="264.16" y2="330.44" stroke="#303030" stroke-width="1.05" />
<line x1="367.36" y1="330.44" x2="398.32" y2="330.44" stroke="#303030" stroke-width="1.05" />
<text x="0.00" y="0.00" font-size="8.64" fill="#1c1c1c" font-family="'Liberation Serif', serif" text-anchor="end" stroke="#1c1c1c" stroke-width="0.22"  transform="translate(255.86,329.64) scale(0.955,1)">5</text>
<text x="0.00" y="0.00" font-size="8.64" fill="#1c1c1c" font-family="'Liberation Serif', serif" stroke="#1c1c1c" stroke-width="0.22"  transform="translate(375.36,329.64) scale(0.955,1)">10</text>
<text x="0.00" y="0.00" font-size="8.64" fill="#1c1c1c" font-family="'Liberation Serif', serif" stroke="#1c1c1c" stroke-width="0.22"  transform="translate(270.66,334.14) scale(0.955,1)">VCC</text>
<text x="0.00" y="0.00" font-size="8.64" fill="#1c1c1c" font-family="'Liberation Serif', serif" text-anchor="end" stroke="#1c1c1c" stroke-width="0.22"  transform="translate(360.36,334.14) scale(0.955,1)">GND</text>
<line x1="233.20" y1="340.76" x2="264.16" y2="340.76" stroke="#303030" stroke-width="1.05" />
<line x1="367.36" y1="340.76" x2="398.32" y2="340.76" stroke="#303030" stroke-width="1.05" />
<text x="0.00" y="0.00" font-size="8.64" fill="#1c1c1c" font-family="'Liberation Serif', serif" text-anchor="end" stroke="#1c1c1c" stroke-width="0.22"  transform="translate(255.86,339.96) scale(0.955,1)">6</text>
<text x="0.00" y="0.00" font-size="8.64" fill="#1c1c1c" font-family="'Liberation Serif', serif" stroke="#1c1c1c" stroke-width="0.22"  transform="translate(375.36,339.96) scale(0.955,1)">9</text>
<text x="0.00" y="0.00" font-size="8.64" fill="#1c1c1c" font-family="'Liberation Serif', serif" stroke="#1c1c1c" stroke-width="0.22"  transform="translate(270.66,344.46) scale(0.955,1)">R9(1)</text>
<text x="0.00" y="0.00" font-size="8.64" fill="#1c1c1c" font-family="'Liberation Serif', serif" text-anchor="end" stroke="#1c1c1c" stroke-width="0.22"  transform="translate(360.36,344.46) scale(0.955,1)">QB</text>
<line x1="233.20" y1="351.08" x2="264.16" y2="351.08" stroke="#303030" stroke-width="1.05" />
<line x1="367.36" y1="351.08" x2="398.32" y2="351.08" stroke="#303030" stroke-width="1.05" />
<text x="0.00" y="0.00" font-size="8.64" fill="#1c1c1c" font-family="'Liberation Serif', serif" text-anchor="end" stroke="#1c1c1c" stroke-width="0.22"  transform="translate(255.86,350.28) scale(0.955,1)">7</text>
<text x="0.00" y="0.00" font-size="8.64" fill="#1c1c1c" font-family="'Liberation Serif', serif" stroke="#1c1c1c" stroke-width="0.22"  transform="translate(375.36,350.28) scale(0.955,1)">8</text>
<text x="0.00" y="0.00" font-size="8.64" fill="#1c1c1c" font-family="'Liberation Serif', serif" stroke="#1c1c1c" stroke-width="0.22"  transform="translate(270.66,354.78) scale(0.955,1)">R9(2)</text>
<text x="0.00" y="0.00" font-size="8.64" fill="#1c1c1c" font-family="'Liberation Serif', serif" text-anchor="end" stroke="#1c1c1c" stroke-width="0.22"  transform="translate(360.36,354.78) scale(0.955,1)">QC</text>
<line x1="460.24" y1="232.56" x2="460.24" y2="242.56" stroke="#9c3c3c" stroke-width="1.1" />
<text x="441.00" y="241.30" font-size="8.64" fill="#8c3434" font-family="'Liberation Serif', serif" textLength="16.50" lengthAdjust="spacingAndGlyphs" stroke="#8c3434" stroke-width="0.22" >VCC</text>
<polyline points="460.24,237.56 491.20,237.56" fill="none" stroke="#2c2c74" stroke-width="1.15" stroke-linejoin="miter" stroke-linecap="square"/>
<circle cx="470.56" cy="237.56" r="2.5" fill="#20205a"/>
<polyline points="470.56,237.56 470.56,247.88 491.20,247.88" fill="none" stroke="#2c2c74" stroke-width="1.15" stroke-linejoin="miter" stroke-linecap="square"/>
<polyline points="491.20,258.20 470.56,258.20 470.56,289.16 491.20,289.16" fill="none" stroke="#2c2c74" stroke-width="1.15" stroke-linejoin="miter" stroke-linecap="square"/>
<circle cx="491.20" cy="289.16" r="2.5" fill="#20205a"/>
<line x1="491.20" y1="289.16" x2="491.20" y2="299.48" stroke="#9c3c3c" stroke-width="1.1" />
<line x1="480.80" y1="299.48" x2="501.60" y2="299.48" stroke="#9c3c3c" stroke-width="1.1" />
<line x1="484.00" y1="303.08" x2="498.40" y2="303.08" stroke="#9c3c3c" stroke-width="1.1" />
<line x1="487.40" y1="306.48" x2="495.00" y2="306.48" stroke="#9c3c3c" stroke-width="1.1" />
<line x1="490.40" y1="309.48" x2="492.00" y2="309.48" stroke="#9c3c3c" stroke-width="1.0" />
<text x="483.00" y="318.30" font-size="8.64" fill="#8c3434" font-family="'Liberation Serif', serif" textLength="16.00" lengthAdjust="spacingAndGlyphs" stroke="#8c3434" stroke-width="0.22" >GND</text>
<rect x="522.16" y="206.60" width="61.92" height="92.88" fill="#fffcae" stroke="#8e4c2a" stroke-width="1.1"/>
<rect x="542.80" y="206.60" width="20.64" height="9.80" fill="none" stroke="#8e4c2a" stroke-width="1.1"/>
<text x="521.70" y="205.60" font-size="8.64" fill="#34346e" font-family="'Liberation Serif', serif" textLength="10.00" lengthAdjust="spacingAndGlyphs" stroke="#34346e" stroke-width="0.22" >U1</text>
<text x="521.70" y="309.30" font-size="8.64" fill="#34346e" font-family="'Liberation Serif', serif" textLength="22.00" lengthAdjust="spacingAndGlyphs" stroke="#34346e" stroke-width="0.22" >74247</text>
<line x1="491.20" y1="216.92" x2="522.16" y2="216.92" stroke="#303030" stroke-width="1.05" />
<line x1="584.08" y1="216.92" x2="615.04" y2="216.92" stroke="#303030" stroke-width="1.05" />
<text x="0.00" y="0.00" font-size="8.64" fill="#1c1c1c" font-family="'Liberation Serif', serif" text-anchor="end" stroke="#1c1c1c" stroke-width="0.22"  transform="translate(513.66,216.12) scale(0.955,1)">1</text>
<text x="0.00" y="0.00" font-size="8.64" fill="#1c1c1c" font-family="'Liberation Serif', serif" stroke="#1c1c1c" stroke-width="0.22"  transform="translate(592.08,216.12) scale(0.955,1)">16</text>
<text x="0.00" y="0.00" font-size="8.64" fill="#1c1c1c" font-family="'Liberation Serif', serif" stroke="#1c1c1c" stroke-width="0.22"  transform="translate(528.66,220.62) scale(0.955,1)">B</text>
<text x="0.00" y="0.00" font-size="8.64" fill="#1c1c1c" font-family="'Liberation Serif', serif" text-anchor="end" stroke="#1c1c1c" stroke-width="0.22"  transform="translate(577.58,220.62) scale(0.955,1)">VCC</text>
<line x1="491.20" y1="227.24" x2="522.16" y2="227.24" stroke="#303030" stroke-width="1.05" />
<line x1="584.08" y1="227.24" x2="615.04" y2="227.24" stroke="#303030" stroke-width="1.05" />
<text x="0.00" y="0.00" font-size="8.64" fill="#1c1c1c" font-family="'Liberation Serif', serif" text-anchor="end" stroke="#1c1c1c" stroke-width="0.22"  transform="translate(513.66,226.44) scale(0.955,1)">2</text>
<text x="0.00" y="0.00" font-size="8.64" fill="#1c1c1c" font-family="'Liberation Serif', serif" stroke="#1c1c1c" stroke-width="0.22"  transform="translate(592.08,226.44) scale(0.955,1)">15</text>
<text x="0.00" y="0.00" font-size="8.64" fill="#1c1c1c" font-family="'Liberation Serif', serif" stroke="#1c1c1c" stroke-width="0.22"  transform="translate(528.66,230.94) scale(0.955,1)">C</text>
<text x="0.00" y="0.00" font-size="8.64" fill="#1c1c1c" font-family="'Liberation Serif', serif" text-anchor="end" stroke="#1c1c1c" stroke-width="0.22"  transform="translate(577.58,230.94) scale(0.955,1)">f</text>
<line x1="491.20" y1="237.56" x2="522.16" y2="237.56" stroke="#303030" stroke-width="1.05" />
<line x1="584.08" y1="237.56" x2="615.04" y2="237.56" stroke="#303030" stroke-width="1.05" />
<text x="0.00" y="0.00" font-size="8.64" fill="#1c1c1c" font-family="'Liberation Serif', serif" text-anchor="end" stroke="#1c1c1c" stroke-width="0.22"  transform="translate(513.66,236.76) scale(0.955,1)">3</text>
<text x="0.00" y="0.00" font-size="8.64" fill="#1c1c1c" font-family="'Liberation Serif', serif" stroke="#1c1c1c" stroke-width="0.22"  transform="translate(592.08,236.76) scale(0.955,1)">14</text>
<text x="0.00" y="0.00" font-size="8.64" fill="#1c1c1c" font-family="'Liberation Serif', serif" stroke="#1c1c1c" stroke-width="0.22"  transform="translate(528.66,241.26) scale(0.955,1)">LT</text>
<text x="0.00" y="0.00" font-size="8.64" fill="#1c1c1c" font-family="'Liberation Serif', serif" text-anchor="end" stroke="#1c1c1c" stroke-width="0.22"  transform="translate(577.58,241.26) scale(0.955,1)">g</text>
<line x1="491.20" y1="247.88" x2="522.16" y2="247.88" stroke="#303030" stroke-width="1.05" />
<line x1="584.08" y1="247.88" x2="615.04" y2="247.88" stroke="#303030" stroke-width="1.05" />
<text x="0.00" y="0.00" font-size="8.64" fill="#1c1c1c" font-family="'Liberation Serif', serif" text-anchor="end" stroke="#1c1c1c" stroke-width="0.22"  transform="translate(513.66,247.08) scale(0.955,1)">4</text>
<text x="0.00" y="0.00" font-size="8.64" fill="#1c1c1c" font-family="'Liberation Serif', serif" stroke="#1c1c1c" stroke-width="0.22"  transform="translate(592.08,247.08) scale(0.955,1)">13</text>
<text x="0.00" y="0.00" font-size="8.64" fill="#1c1c1c" font-family="'Liberation Serif', serif" stroke="#1c1c1c" stroke-width="0.22"  transform="translate(528.66,251.58) scale(0.955,1)">BI/RB0</text>
<text x="0.00" y="0.00" font-size="8.64" fill="#1c1c1c" font-family="'Liberation Serif', serif" text-anchor="end" stroke="#1c1c1c" stroke-width="0.22"  transform="translate(577.58,251.58) scale(0.955,1)">a</text>
<line x1="491.20" y1="258.20" x2="522.16" y2="258.20" stroke="#303030" stroke-width="1.05" />
<line x1="584.08" y1="258.20" x2="615.04" y2="258.20" stroke="#303030" stroke-width="1.05" />
<text x="0.00" y="0.00" font-size="8.64" fill="#1c1c1c" font-family="'Liberation Serif', serif" text-anchor="end" stroke="#1c1c1c" stroke-width="0.22"  transform="translate(513.66,257.40) scale(0.955,1)">5</text>
<text x="0.00" y="0.00" font-size="8.64" fill="#1c1c1c" font-family="'Liberation Serif', serif" stroke="#1c1c1c" stroke-width="0.22"  transform="translate(592.08,257.40) scale(0.955,1)">12</text>
<text x="0.00" y="0.00" font-size="8.64" fill="#1c1c1c" font-family="'Liberation Serif', serif" stroke="#1c1c1c" stroke-width="0.22"  transform="translate(528.66,261.90) scale(0.955,1)">RBI</text>
<text x="0.00" y="0.00" font-size="8.64" fill="#1c1c1c" font-family="'Liberation Serif', serif" text-anchor="end" stroke="#1c1c1c" stroke-width="0.22"  transform="translate(577.58,261.90) scale(0.955,1)">b</text>
<line x1="491.20" y1="268.52" x2="522.16" y2="268.52" stroke="#303030" stroke-width="1.05" />
<line x1="584.08" y1="268.52" x2="615.04" y2="268.52" stroke="#303030" stroke-width="1.05" />
<text x="0.00" y="0.00" font-size="8.64" fill="#1c1c1c" font-family="'Liberation Serif', serif" text-anchor="end" stroke="#1c1c1c" stroke-width="0.22"  transform="translate(513.66,267.72) scale(0.955,1)">6</text>
<text x="0.00" y="0.00" font-size="8.64" fill="#1c1c1c" font-family="'Liberation Serif', serif" stroke="#1c1c1c" stroke-width="0.22"  transform="translate(592.08,267.72) scale(0.955,1)">11</text>
<text x="0.00" y="0.00" font-size="8.64" fill="#1c1c1c" font-family="'Liberation Serif', serif" stroke="#1c1c1c" stroke-width="0.22"  transform="translate(528.66,272.22) scale(0.955,1)">D</text>
<text x="0.00" y="0.00" font-size="8.64" fill="#1c1c1c" font-family="'Liberation Serif', serif" text-anchor="end" stroke="#1c1c1c" stroke-width="0.22"  transform="translate(577.58,272.22) scale(0.955,1)">c</text>
<line x1="491.20" y1="278.84" x2="522.16" y2="278.84" stroke="#303030" stroke-width="1.05" />
<line x1="584.08" y1="278.84" x2="615.04" y2="278.84" stroke="#303030" stroke-width="1.05" />
<text x="0.00" y="0.00" font-size="8.64" fill="#1c1c1c" font-family="'Liberation Serif', serif" text-anchor="end" stroke="#1c1c1c" stroke-width="0.22"  transform="translate(513.66,278.04) scale(0.955,1)">7</text>
<text x="0.00" y="0.00" font-size="8.64" fill="#1c1c1c" font-family="'Liberation Serif', serif" stroke="#1c1c1c" stroke-width="0.22"  transform="translate(592.08,278.04) scale(0.955,1)">10</text>
<text x="0.00" y="0.00" font-size="8.64" fill="#1c1c1c" font-family="'Liberation Serif', serif" stroke="#1c1c1c" stroke-width="0.22"  transform="translate(528.66,282.54) scale(0.955,1)">A</text>
<text x="0.00" y="0.00" font-size="8.64" fill="#1c1c1c" font-family="'Liberation Serif', serif" text-anchor="end" stroke="#1c1c1c" stroke-width="0.22"  transform="translate(577.58,282.54) scale(0.955,1)">d</text>
<line x1="491.20" y1="289.16" x2="522.16" y2="289.16" stroke="#303030" stroke-width="1.05" />
<line x1="584.08" y1="289.16" x2="615.04" y2="289.16" stroke="#303030" stroke-width="1.05" />
<text x="0.00" y="0.00" font-size="8.64" fill="#1c1c1c" font-family="'Liberation Serif', serif" text-anchor="end" stroke="#1c1c1c" stroke-width="0.22"  transform="translate(513.66,288.36) scale(0.955,1)">8</text>
<text x="0.00" y="0.00" font-size="8.64" fill="#1c1c1c" font-family="'Liberation Serif', serif" stroke="#1c1c1c" stroke-width="0.22"  transform="translate(592.08,288.36) scale(0.955,1)">9</text>
<text x="0.00" y="0.00" font-size="8.64" fill="#1c1c1c" font-family="'Liberation Serif', serif" stroke="#1c1c1c" stroke-width="0.22"  transform="translate(528.66,292.86) scale(0.955,1)">GND</text>
<text x="0.00" y="0.00" font-size="8.64" fill="#1c1c1c" font-family="'Liberation Serif', serif" text-anchor="end" stroke="#1c1c1c" stroke-width="0.22"  transform="translate(577.58,292.86) scale(0.955,1)">e</text>
<line x1="609.84" y1="206.60" x2="620.24" y2="206.60" stroke="#9c3c3c" stroke-width="1.1" />
<line x1="615.04" y1="206.60" x2="615.04" y2="216.92" stroke="#9c3c3c" stroke-width="1.1" />
<text x="607.50" y="204.30" font-size="8.64" fill="#8c3434" font-family="'Liberation Serif', serif" textLength="16.30" lengthAdjust="spacingAndGlyphs" stroke="#8c3434" stroke-width="0.22" >VCC</text>
<polyline points="615.04,227.24 635.68,227.24 635.68,309.80 759.52,309.80 759.52,268.52 769.84,268.52" fill="none" stroke="#2c2c74" stroke-width="1.15" stroke-linejoin="miter" stroke-linecap="square"/>
<polyline points="615.04,237.56 625.36,237.56 625.36,299.48 769.84,299.48 769.84,278.84" fill="none" stroke="#2c2c74" stroke-width="1.15" stroke-linejoin="miter" stroke-linecap="square"/>
<polyline points="615.04,247.88 656.32,247.88 656.32,216.92 769.84,216.92" fill="none" stroke="#2c2c74" stroke-width="1.15" stroke-linejoin="miter" stroke-linecap="square"/>
<polyline points="615.04,258.20 666.64,258.20 666.64,227.24 769.84,227.24" fill="none" stroke="#2c2c74" stroke-width="1.15" stroke-linejoin="miter" stroke-linecap="square"/>
<polyline points="615.04,268.52 676.96,268.52 676.96,237.56 769.84,237.56" fill="none" stroke="#2c2c74" stroke-width="1.15" stroke-linejoin="miter" stroke-linecap="square"/>
<polyline points="615.04,278.84 687.28,278.84 687.28,247.88 769.84,247.88" fill="none" stroke="#2c2c74" stroke-width="1.15" stroke-linejoin="miter" stroke-linecap="square"/>
<polyline points="615.04,289.16 697.60,289.16 697.60,258.20 769.84,258.20" fill="none" stroke="#2c2c74" stroke-width="1.15" stroke-linejoin="miter" stroke-linecap="square"/>
<line x1="769.84" y1="216.92" x2="784.50" y2="216.92" stroke="#303030" stroke-width="1.05" />
<polyline points="784.50,216.92 785.67,215.02 788.00,218.82 790.33,215.02 792.67,218.82 795.00,215.02 797.33,218.82 798.50,216.92" fill="none" stroke="#3030d0" stroke-width="1.0" />
<line x1="798.50" y1="216.92" x2="811.12" y2="216.92" stroke="#303030" stroke-width="1.05" />
<text x="729.40" y="215.22" font-size="8.64" fill="#34346e" font-family="'Liberation Serif', serif" textLength="11.70" lengthAdjust="spacingAndGlyphs" stroke="#34346e" stroke-width="0.22" >150</text>
<text x="749.90" y="215.22" font-size="8.64" fill="#34346e" font-family="'Liberation Serif', serif" textLength="15.20" lengthAdjust="spacingAndGlyphs" stroke="#34346e" stroke-width="0.22" >Res1</text>
<text x="800.90" y="215.22" font-size="8.64" fill="#34346e" font-family="'Liberation Serif', serif" textLength="9.30" lengthAdjust="spacingAndGlyphs" stroke="#34346e" stroke-width="0.22" >R1</text>
<line x1="769.84" y1="227.24" x2="784.50" y2="227.24" stroke="#303030" stroke-width="1.05" />
<polyline points="784.50,227.24 785.67,225.34 788.00,229.14 790.33,225.34 792.67,229.14 795.00,225.34 797.33,229.14 798.50,227.24" fill="none" stroke="#3030d0" stroke-width="1.0" />
<line x1="798.50" y1="227.24" x2="811.12" y2="227.24" stroke="#303030" stroke-width="1.05" />
<text x="729.40" y="225.54" font-size="8.64" fill="#34346e" font-family="'Liberation Serif', serif" textLength="11.70" lengthAdjust="spacingAndGlyphs" stroke="#34346e" stroke-width="0.22" >150</text>
<text x="749.90" y="225.54" font-size="8.64" fill="#34346e" font-family="'Liberation Serif', serif" textLength="15.20" lengthAdjust="spacingAndGlyphs" stroke="#34346e" stroke-width="0.22" >Res1</text>
<text x="800.90" y="225.54" font-size="8.64" fill="#34346e" font-family="'Liberation Serif', serif" textLength="9.30" lengthAdjust="spacingAndGlyphs" stroke="#34346e" stroke-width="0.22" >R2</text>
<line x1="769.84" y1="237.56" x2="784.50" y2="237.56" stroke="#303030" stroke-width="1.05" />
<polyline points="784.50,237.56 785.67,235.66 788.00,239.46 790.33,235.66 792.67,239.46 795.00,235.66 797.33,239.46 798.50,237.56" fill="none" stroke="#3030d0" stroke-width="1.0" />
<line x1="798.50" y1="237.56" x2="811.12" y2="237.56" stroke="#303030" stroke-width="1.05" />
<text x="729.40" y="235.86" font-size="8.64" fill="#34346e" font-family="'Liberation Serif', serif" textLength="11.70" lengthAdjust="spacingAndGlyphs" stroke="#34346e" stroke-width="0.22" >150</text>
<text x="749.90" y="235.86" font-size="8.64" fill="#34346e" font-family="'Liberation Serif', serif" textLength="15.20" lengthAdjust="spacingAndGlyphs" stroke="#34346e" stroke-width="0.22" >Res1</text>
<text x="800.90" y="235.86" font-size="8.64" fill="#34346e" font-family="'Liberation Serif', serif" textLength="9.30" lengthAdjust="spacingAndGlyphs" stroke="#34346e" stroke-width="0.22" >R3</text>
<line x1="769.84" y1="247.88" x2="784.50" y2="247.88" stroke="#303030" stroke-width="1.05" />
<polyline points="784.50,247.88 785.67,245.98 788.00,249.78 790.33,245.98 792.67,249.78 795.00,245.98 797.33,249.78 798.50,247.88" fill="none" stroke="#3030d0" stroke-width="1.0" />
<line x1="798.50" y1="247.88" x2="811.12" y2="247.88" stroke="#303030" stroke-width="1.05" />
<text x="729.40" y="246.18" font-size="8.64" fill="#34346e" font-family="'Liberation Serif', serif" textLength="11.70" lengthAdjust="spacingAndGlyphs" stroke="#34346e" stroke-width="0.22" >150</text>
<text x="749.90" y="246.18" font-size="8.64" fill="#34346e" font-family="'Liberation Serif', serif" textLength="15.20" lengthAdjust="spacingAndGlyphs" stroke="#34346e" stroke-width="0.22" >Res1</text>
<text x="800.90" y="246.18" font-size="8.64" fill="#34346e" font-family="'Liberation Serif', serif" textLength="9.30" lengthAdjust="spacingAndGlyphs" stroke="#34346e" stroke-width="0.22" >R4</text>
<line x1="769.84" y1="258.20" x2="784.50" y2="258.20" stroke="#303030" stroke-width="1.05" />
<polyline points="784.50,258.20 785.67,256.30 788.00,260.10 790.33,256.30 792.67,260.10 795.00,256.30 797.33,260.10 798.50,258.20" fill="none" stroke="#3030d0" stroke-width="1.0" />
<line x1="798.50" y1="258.20" x2="811.12" y2="258.20" stroke="#303030" stroke-width="1.05" />
<text x="729.40" y="256.50" font-size="8.64" fill="#34346e" font-family="'Liberation Serif', serif" textLength="11.70" lengthAdjust="spacingAndGlyphs" stroke="#34346e" stroke-width="0.22" >150</text>
<text x="749.90" y="256.50" font-size="8.64" fill="#34346e" font-family="'Liberation Serif', serif" textLength="15.20" lengthAdjust="spacingAndGlyphs" stroke="#34346e" stroke-width="0.22" >Res1</text>
<text x="800.90" y="256.50" font-size="8.64" fill="#34346e" font-family="'Liberation Serif', serif" textLength="9.30" lengthAdjust="spacingAndGlyphs" stroke="#34346e" stroke-width="0.22" >R5</text>
<line x1="769.84" y1="268.52" x2="784.50" y2="268.52" stroke="#303030" stroke-width="1.05" />
<polyline points="784.50,268.52 785.67,266.62 788.00,270.42 790.33,266.62 792.67,270.42 795.00,266.62 797.33,270.42 798.50,268.52" fill="none" stroke="#3030d0" stroke-width="1.0" />
<line x1="798.50" y1="268.52" x2="811.12" y2="268.52" stroke="#303030" stroke-width="1.05" />
<text x="729.40" y="266.82" font-size="8.64" fill="#34346e" font-family="'Liberation Serif', serif" textLength="11.70" lengthAdjust="spacingAndGlyphs" stroke="#34346e" stroke-width="0.22" >150</text>
<text x="749.90" y="266.82" font-size="8.64" fill="#34346e" font-family="'Liberation Serif', serif" textLength="15.20" lengthAdjust="spacingAndGlyphs" stroke="#34346e" stroke-width="0.22" >Res1</text>
<text x="800.90" y="266.82" font-size="8.64" fill="#34346e" font-family="'Liberation Serif', serif" textLength="9.30" lengthAdjust="spacingAndGlyphs" stroke="#34346e" stroke-width="0.22" >R6</text>
<line x1="769.84" y1="278.84" x2="784.50" y2="278.84" stroke="#303030" stroke-width="1.05" />
<polyline points="784.50,278.84 785.67,276.94 788.00,280.74 790.33,276.94 792.67,280.74 795.00,276.94 797.33,280.74 798.50,278.84" fill="none" stroke="#3030d0" stroke-width="1.0" />
<line x1="798.50" y1="278.84" x2="811.12" y2="278.84" stroke="#303030" stroke-width="1.05" />
<text x="729.40" y="277.14" font-size="8.64" fill="#34346e" font-family="'Liberation Serif', serif" textLength="11.70" lengthAdjust="spacingAndGlyphs" stroke="#34346e" stroke-width="0.22" >150</text>
<text x="749.90" y="277.14" font-size="8.64" fill="#34346e" font-family="'Liberation Serif', serif" textLength="15.20" lengthAdjust="spacingAndGlyphs" stroke="#34346e" stroke-width="0.22" >Res1</text>
<text x="800.90" y="277.14" font-size="8.64" fill="#34346e" font-family="'Liberation Serif', serif" textLength="9.30" lengthAdjust="spacingAndGlyphs" stroke="#34346e" stroke-width="0.22" >R7</text>
<rect x="831.76" y="206.60" width="61.92" height="92.88" fill="#fffcae" stroke="#8e4c2a" stroke-width="1.1"/>
<text x="832.00" y="205.60" font-size="8.64" fill="#34346e" font-family="'Liberation Serif', serif" textLength="14.00" lengthAdjust="spacingAndGlyphs" stroke="#34346e" stroke-width="0.22" >DS1</text>
<text x="832.00" y="309.30" font-size="8.64" fill="#34346e" font-family="'Liberation Serif', serif" textLength="42.00" lengthAdjust="spacingAndGlyphs" stroke="#34346e" stroke-width="0.22" >Dpy Red-CA</text>
<line x1="811.12" y1="216.92" x2="831.76" y2="216.92" stroke="#303030" stroke-width="1.05" />
<text x="0.00" y="0.00" font-size="8.64" fill="#1c1c1c" font-family="'Liberation Serif', serif" text-anchor="end" stroke="#1c1c1c" stroke-width="0.22"  transform="translate(824.26,216.12) scale(0.955,1)">10</text>
<text x="0.00" y="0.00" font-size="8.64" fill="#1c1c1c" font-family="'Liberation Serif', serif" stroke="#1c1c1c" stroke-width="0.22"  transform="translate(839.00,220.62) scale(0.955,1)">a</text>
<line x1="811.12" y1="227.24" x2="831.76" y2="227.24" stroke="#303030" stroke-width="1.05" />
<text x="0.00" y="0.00" font-size="8.64" fill="#1c1c1c" font-family="'Liberation Serif', serif" text-anchor="end" stroke="#1c1c1c" stroke-width="0.22"  transform="translate(824.26,226.44) scale(0.955,1)">9</text>
<text x="0.00" y="0.00" font-size="8.64" fill="#1c1c1c" font-family="'Liberation Serif', serif" stroke="#1c1c1c" stroke-width="0.22"  transform="translate(839.00,230.94) scale(0.955,1)">b</text>
<line x1="811.12" y1="237.56" x2="831.76" y2="237.56" stroke="#303030" stroke-width="1.05" />
<text x="0.00" y="0.00" font-size="8.64" fill="#1c1c1c" font-family="'Liberation Serif', serif" text-anchor="end" stroke="#1c1c1c" stroke-width="0.22"  transform="translate(824.26,236.76) scale(0.955,1)">8</text>
<text x="0.00" y="0.00" font-size="8.64" fill="#1c1c1c" font-family="'Liberation Serif', serif" stroke="#1c1c1c" stroke-width="0.22"  transform="translate(839.00,241.26) scale(0.955,1)">c</text>
<line x1="811.12" y1="247.88" x2="831.76" y2="247.88" stroke="#303030" stroke-width="1.05" />
<text x="0.00" y="0.00" font-size="8.64" fill="#1c1c1c" font-family="'Liberation Serif', serif" text-anchor="end" stroke="#1c1c1c" stroke-width="0.22"  transform="translate(824.26,247.08) scale(0.955,1)">5</text>
<text x="0.00" y="0.00" font-size="8.64" fill="#1c1c1c" font-family="'Liberation Serif', serif" stroke="#1c1c1c" stroke-width="0.22"  transform="translate(839.00,251.58) scale(0.955,1)">d</text>
<line x1="811.12" y1="258.20" x2="831.76" y2="258.20" stroke="#303030" stroke-width="1.05" />
<text x="0.00" y="0.00" font-size="8.64" fill="#1c1c1c" font-family="'Liberation Serif', serif" text-anchor="end" stroke="#1c1c1c" stroke-width="0.22"  transform="translate(824.26,257.40) scale(0.955,1)">4</text>
<text x="0.00" y="0.00" font-size="8.64" fill="#1c1c1c" font-family="'Liberation Serif', serif" stroke="#1c1c1c" stroke-width="0.22"  transform="translate(839.00,261.90) scale(0.955,1)">e</text>
<line x1="811.12" y1="268.52" x2="831.76" y2="268.52" stroke="#303030" stroke-width="1.05" />
<text x="0.00" y="0.00" font-size="8.64" fill="#1c1c1c" font-family="'Liberation Serif', serif" text-anchor="end" stroke="#1c1c1c" stroke-width="0.22"  transform="translate(824.26,267.72) scale(0.955,1)">2</text>
<text x="0.00" y="0.00" font-size="8.64" fill="#1c1c1c" font-family="'Liberation Serif', serif" stroke="#1c1c1c" stroke-width="0.22"  transform="translate(839.00,272.22) scale(0.955,1)">f</text>
<line x1="811.12" y1="278.84" x2="831.76" y2="278.84" stroke="#303030" stroke-width="1.05" />
<text x="0.00" y="0.00" font-size="8.64" fill="#1c1c1c" font-family="'Liberation Serif', serif" text-anchor="end" stroke="#1c1c1c" stroke-width="0.22"  transform="translate(824.26,278.04) scale(0.955,1)">3</text>
<text x="0.00" y="0.00" font-size="8.64" fill="#1c1c1c" font-family="'Liberation Serif', serif" stroke="#1c1c1c" stroke-width="0.22"  transform="translate(839.00,282.54) scale(0.955,1)">g</text>
<line x1="811.12" y1="289.16" x2="831.76" y2="289.16" stroke="#303030" stroke-width="1.05" />
<text x="0.00" y="0.00" font-size="8.64" fill="#1c1c1c" font-family="'Liberation Serif', serif" text-anchor="end" stroke="#1c1c1c" stroke-width="0.22"  transform="translate(824.26,288.36) scale(0.955,1)">7</text>
<text x="0.00" y="0.00" font-size="8.64" fill="#1c1c1c" font-family="'Liberation Serif', serif" stroke="#1c1c1c" stroke-width="0.22"  transform="translate(839.00,292.86) scale(0.955,1)">DP</text>
<line x1="893.68" y1="216.92" x2="914.32" y2="216.92" stroke="#303030" stroke-width="1.05" />
<text x="0.00" y="0.00" font-size="8.64" fill="#1c1c1c" font-family="'Liberation Serif', serif" stroke="#1c1c1c" stroke-width="0.22"  transform="translate(902.18,216.12) scale(0.955,1)">1</text>
<text x="0.00" y="0.00" font-size="8.64" fill="#1c1c1c" font-family="'Liberation Serif', serif" text-anchor="end" stroke="#1c1c1c" stroke-width="0.22"  transform="translate(886.68,220.62) scale(0.955,1)">A</text>
<line x1="893.68" y1="227.24" x2="914.32" y2="227.24" stroke="#303030" stroke-width="1.05" />
<text x="0.00" y="0.00" font-size="8.64" fill="#1c1c1c" font-family="'Liberation Serif', serif" stroke="#1c1c1c" stroke-width="0.22"  transform="translate(902.18,226.44) scale(0.955,1)">6</text>
<text x="0.00" y="0.00" font-size="8.64" fill="#1c1c1c" font-family="'Liberation Serif', serif" text-anchor="end" stroke="#1c1c1c" stroke-width="0.22"  transform="translate(886.68,230.94) scale(0.955,1)">A</text>
<polyline points="914.32,227.24 914.32,216.92" fill="none" stroke="#303030" stroke-width="1.05" stroke-linejoin="miter" stroke-linecap="square"/>
<circle cx="914.32" cy="216.92" r="2.5" fill="#20205a"/>
<line x1="909.12" y1="196.28" x2="919.52" y2="196.28" stroke="#9c3c3c" stroke-width="1.1" />
<line x1="914.32" y1="196.28" x2="914.32" y2="206.60" stroke="#9c3c3c" stroke-width="1.1" />
<text x="906.80" y="195.30" font-size="8.64" fill="#8c3434" font-family="'Liberation Serif', serif" textLength="16.70" lengthAdjust="spacingAndGlyphs" stroke="#8c3434" stroke-width="0.22" >VCC</text>
<polyline points="914.32,206.60 914.32,216.92" fill="none" stroke="#2c2c74" stroke-width="1.15" stroke-linejoin="miter" stroke-linecap="square"/>
<g stroke="#a01410" stroke-width="2.6" fill="none" stroke-linecap="round"><path d="M858 232.5 L874.5 232.5"/><path d="M855.2 253.2 L874 253.2"/><path d="M852.5 273.3 L870.8 273.3"/><path d="M856 234.8 L854 251.2"/><path d="M877.3 235 L875.2 251.2"/><path d="M853.8 255.2 L851.8 271.5"/><path d="M875 255.2 L872.8 271.5"/></g>
<circle cx="883" cy="274" r="1.9" fill="#a01410"/>
<rect x="563.44" y="371.72" width="30.96" height="30.96" fill="#fffcae" stroke="#8e4c2a" stroke-width="1.1"/>
<line x1="573.76" y1="402.68" x2="573.76" y2="423.32" stroke="#303030" stroke-width="1.05" />
<line x1="584.08" y1="402.68" x2="584.08" y2="423.32" stroke="#303030" stroke-width="1.05" />
<line x1="563.44" y1="423.32" x2="573.76" y2="423.32" stroke="#9c3c3c" stroke-width="1.0" />
<line x1="563.44" y1="418.32" x2="563.44" y2="428.32" stroke="#9c3c3c" stroke-width="1.1" />
<text x="545.40" y="428.00" font-size="8.64" fill="#8c3434" font-family="'Liberation Serif', serif" textLength="15.40" lengthAdjust="spacingAndGlyphs" stroke="#8c3434" stroke-width="0.22" >VCC</text>
<line x1="584.08" y1="423.32" x2="594.40" y2="423.32" stroke="#9c3c3c" stroke-width="1.0" />
<line x1="594.40" y1="413.32" x2="594.40" y2="433.32" stroke="#9c3c3c" stroke-width="1.1" />
<line x1="597.40" y1="416.32" x2="597.40" y2="430.32" stroke="#9c3c3c" stroke-width="1.1" />
<line x1="600.40" y1="419.32" x2="600.40" y2="427.32" stroke="#9c3c3c" stroke-width="1.1" />
<line x1="603.40" y1="422.52" x2="603.40" y2="424.12" stroke="#9c3c3c" stroke-width="1.0" />
<text x="607.00" y="428.00" font-size="8.64" fill="#8c3434" font-family="'Liberation Serif', serif" textLength="16.00" lengthAdjust="spacingAndGlyphs" stroke="#8c3434" stroke-width="0.22" >GND</text>
<text x="563.50" y="371.30" font-size="8.64" fill="#34346e" font-family="'Liberation Serif', serif" textLength="8.00" lengthAdjust="spacingAndGlyphs" stroke="#34346e" stroke-width="0.22" >P1</text>
<text x="563.50" y="435.60" font-size="8.64" fill="#34346e" font-family="'Liberation Serif', serif" textLength="27.50" lengthAdjust="spacingAndGlyphs" stroke="#34346e" stroke-width="0.22" >Header 2</text>
<text x="0.00" y="1.00" font-size="8.64" fill="#1c1c1c" font-family="'Liberation Serif', serif" stroke="#1c1c1c" stroke-width="0.22" transform="translate(574,394.5) rotate(-90)" text-anchor="middle">1</text>
<text x="0.00" y="1.00" font-size="8.64" fill="#1c1c1c" font-family="'Liberation Serif', serif" stroke="#1c1c1c" stroke-width="0.22" transform="translate(586,394.5) rotate(-90)" text-anchor="middle">2</text>
<polyline points="222.30,475.30 314.80,475.30" fill="none" stroke="#2c2c74" stroke-width="1.15" stroke-linejoin="miter" stroke-linecap="square"/>
<circle cx="289.00" cy="475.30" r="2.5" fill="#20205a"/>
<circle cx="305.00" cy="475.30" r="2.5" fill="#20205a"/>
<line x1="299.80" y1="465.50" x2="310.20" y2="465.50" stroke="#9c3c3c" stroke-width="1.1" />
<line x1="305.00" y1="465.50" x2="305.00" y2="475.30" stroke="#9c3c3c" stroke-width="1.1" />
<text x="297.00" y="463.80" font-size="8.64" fill="#8c3434" font-family="'Liberation Serif', serif" textLength="16.20" lengthAdjust="spacingAndGlyphs" stroke="#8c3434" stroke-width="0.22" >VCC</text>
<line x1="289.00" y1="475.30" x2="289.00" y2="520.20" stroke="#303030" stroke-width="1.05" />
<line x1="314.80" y1="475.30" x2="314.80" y2="520.20" stroke="#303030" stroke-width="1.05" />
<text x="0.00" y="1.00" font-size="8.64" fill="#1c1c1c" font-family="'Liberation Serif', serif" stroke="#1c1c1c" stroke-width="0.22" transform="translate(285.6,508.7) rotate(-90)" text-anchor="middle">4</text>
<text x="0.00" y="1.00" font-size="8.64" fill="#1c1c1c" font-family="'Liberation Serif', serif" stroke="#1c1c1c" stroke-width="0.22" transform="translate(310.2,508.7) rotate(-90)" text-anchor="middle">8</text>
<line x1="222.30" y1="475.30" x2="222.30" y2="489.70" stroke="#2c2c74" stroke-width="1.15" />
<polyline points="222.30,489.70 224.10,490.68 220.50,492.62 224.10,494.57 220.50,496.52 224.10,498.47 220.50,500.42 222.30,501.40" fill="none" stroke="#3030d0" stroke-width="1.0" />
<line x1="222.30" y1="501.40" x2="222.30" y2="526.70" stroke="#303030" stroke-width="1.05" />
<text x="225.20" y="494.80" font-size="8.64" fill="#34346e" font-family="'Liberation Serif', serif" textLength="9.50" lengthAdjust="spacingAndGlyphs" stroke="#34346e" stroke-width="0.22" >R9</text>
<text x="225.20" y="505.00" font-size="8.64" fill="#34346e" font-family="'Liberation Serif', serif" textLength="15.50" lengthAdjust="spacingAndGlyphs" stroke="#34346e" stroke-width="0.22" >Res1</text>
<text x="225.20" y="514.80" font-size="8.64" fill="#34346e" font-family="'Liberation Serif', serif" textLength="7.50" lengthAdjust="spacingAndGlyphs" stroke="#34346e" stroke-width="0.22" >1k</text>
<circle cx="222.30" cy="526.70" r="2.5" fill="#20205a"/>
<polyline points="222.30,526.70 181.40,526.70 181.40,541.40" fill="none" stroke="#2c2c74" stroke-width="1.15" stroke-linejoin="miter" stroke-linecap="square"/>
<polyline points="222.30,526.70 222.30,537.30 244.20,537.30 244.20,530.30" fill="none" stroke="#2c2c74" stroke-width="1.15" stroke-linejoin="miter" stroke-linecap="square"/>
<line x1="244.20" y1="530.30" x2="269.50" y2="530.30" stroke="#303030" stroke-width="1.05" />
<polyline points="181.40,541.40 183.30,542.33 179.50,544.20 183.30,546.07 179.50,547.93 183.30,549.80 179.50,551.67 181.40,552.60" fill="none" stroke="#3030d0" stroke-width="1.0" />
<line x1="181.40" y1="552.60" x2="181.40" y2="567.70" stroke="#303030" stroke-width="1.05" />
<path d="M184.6 547.2 L190.4 543.9 L190.4 550.5 Z" fill="#3030d0"/>
<polyline points="190.00,547.20 244.20,547.20" fill="none" stroke="#2c2c74" stroke-width="1.15" stroke-linejoin="miter" stroke-linecap="square"/>
<line x1="244.20" y1="547.20" x2="269.50" y2="547.20" stroke="#303030" stroke-width="1.05" />
<circle cx="221.90" cy="547.20" r="2.5" fill="#20205a"/>
<circle cx="221.90" cy="557.80" r="2.5" fill="#20205a"/>
<polyline points="221.90,557.80 243.20,557.80 243.20,560.00 244.20,560.00" fill="none" stroke="#2c2c74" stroke-width="1.15" stroke-linejoin="miter" stroke-linecap="square"/>
<line x1="244.20" y1="560.00" x2="269.50" y2="560.00" stroke="#303030" stroke-width="1.05" />
<text x="139.90" y="536.30" font-size="8.64" fill="#34346e" font-family="'Liberation Serif', serif" textLength="13.70" lengthAdjust="spacingAndGlyphs" stroke="#34346e" stroke-width="0.22" >R10</text>
<text x="149.60" y="546.30" font-size="8.64" fill="#34346e" font-family="'Liberation Serif', serif" textLength="16.70" lengthAdjust="spacingAndGlyphs" stroke="#34346e" stroke-width="0.22" >RPot</text>
<text x="149.60" y="556.30" font-size="8.64" fill="#34346e" font-family="'Liberation Serif', serif" textLength="13.70" lengthAdjust="spacingAndGlyphs" stroke="#34346e" stroke-width="0.22" >50K</text>
<polyline points="221.90,547.20 221.90,599.60" fill="none" stroke="#2c2c74" stroke-width="1.15" stroke-linejoin="miter" stroke-linecap="square"/>
<line x1="214.50" y1="599.60" x2="230.00" y2="599.60" stroke="#303030" stroke-width="1.1" />
<path d="M214 605 Q222 601.5 230 605" stroke="#303030" stroke-width="1.1" fill="none"/>
<text x="0.00" y="0.00" font-size="7.0200000000000005" fill="#1c1c1c" font-family="'Liberation Serif', serif" stroke="#1c1c1c" stroke-width="0.22"  transform="translate(224.70,597.80) scale(0.955,1)">+</text>
<polyline points="221.90,603.20 221.90,650.70 428.90,650.70" fill="none" stroke="#2c2c74" stroke-width="1.15" stroke-linejoin="miter" stroke-linecap="square"/>
<text x="231.00" y="600.30" font-size="8.64" fill="#34346e" font-family="'Liberation Serif', serif" textLength="9.50" lengthAdjust="spacingAndGlyphs" stroke="#34346e" stroke-width="0.22" >C1</text>
<text x="231.00" y="611.80" font-size="8.64" fill="#34346e" font-family="'Liberation Serif', serif" textLength="30.50" lengthAdjust="spacingAndGlyphs" stroke="#34346e" stroke-width="0.22" >Cap Pol3</text>
<text x="231.00" y="621.60" font-size="8.64" fill="#34346e" font-family="'Liberation Serif', serif" textLength="12.00" lengthAdjust="spacingAndGlyphs" stroke="#34346e" stroke-width="0.22" >102</text>
<rect x="269.50" y="520.20" width="60.70" height="50.00" fill="#fffcae" stroke="#8e4c2a" stroke-width="1.1"/>
<text x="283.80" y="550.20" font-size="12" fill="#2e2e78" font-family="'Liberation Serif', serif" textLength="30.50" lengthAdjust="spacingAndGlyphs" stroke="#2e2e78" stroke-width="0.3">NE555</text>
<text x="0.00" y="0.00" font-size="8.64" fill="#1c1c1c" font-family="'Liberation Serif', serif" stroke="#1c1c1c" stroke-width="0.22"  transform="translate(258.60,529.80) scale(0.955,1)">7</text>
<text x="0.00" y="0.00" font-size="8.64" fill="#1c1c1c" font-family="'Liberation Serif', serif" stroke="#1c1c1c" stroke-width="0.22"  transform="translate(258.60,546.30) scale(0.955,1)">6</text>
<text x="0.00" y="0.00" font-size="8.64" fill="#1c1c1c" font-family="'Liberation Serif', serif" stroke="#1c1c1c" stroke-width="0.22"  transform="translate(258.60,559.30) scale(0.955,1)">2</text>
<text x="0.00" y="0.00" font-size="8.64" fill="#1c1c1c" font-family="'Liberation Serif', serif" stroke="#1c1c1c" stroke-width="0.22"  transform="translate(339.00,539.30) scale(0.955,1)">3</text>
<polyline points="289.70,570.20 289.70,596.50 292.60,596.50 292.60,650.70" fill="none" stroke="#303030" stroke-width="1.05" stroke-linejoin="miter" stroke-linecap="square"/>
<polyline points="311.70,570.20 311.70,599.40 315.20,599.40 315.20,622.90" fill="none" stroke="#303030" stroke-width="1.05" stroke-linejoin="miter" stroke-linecap="square"/>
<line x1="307.30" y1="622.90" x2="323.40" y2="622.90" stroke="#303030" stroke-width="1.1" />
<line x1="307.30" y1="627.30" x2="323.40" y2="627.30" stroke="#303030" stroke-width="1.1" />
<line x1="315.20" y1="627.30" x2="315.20" y2="650.70" stroke="#303030" stroke-width="1.05" />
<text x="0.00" y="1.00" font-size="8.64" fill="#1c1c1c" font-family="'Liberation Serif', serif" stroke="#1c1c1c" stroke-width="0.22" transform="translate(284.6,583) rotate(-90)" text-anchor="middle">1</text>
<text x="0.00" y="1.00" font-size="8.64" fill="#1c1c1c" font-family="'Liberation Serif', serif" stroke="#1c1c1c" stroke-width="0.22" transform="translate(305.6,583) rotate(-90)" text-anchor="middle">5</text>
<circle cx="288.20" cy="650.70" r="2.5" fill="#20205a"/>
<circle cx="292.60" cy="650.70" r="2.5" fill="#20205a"/>
<circle cx="315.20" cy="650.70" r="2.5" fill="#20205a"/>
<text x="324.90" y="629.00" font-size="8.64" fill="#34346e" font-family="'Liberation Serif', serif" textLength="9.50" lengthAdjust="spacingAndGlyphs" stroke="#34346e" stroke-width="0.22" >C2</text>
<text x="324.90" y="639.00" font-size="8.64" fill="#34346e" font-family="'Liberation Serif', serif" textLength="12.50" lengthAdjust="spacingAndGlyphs" stroke="#34346e" stroke-width="0.22" >Cap</text>
<text x="324.90" y="648.80" font-size="8.64" fill="#34346e" font-family="'Liberation Serif', serif" textLength="21.00" lengthAdjust="spacingAndGlyphs" stroke="#34346e" stroke-width="0.22" >100pF</text>
<line x1="288.20" y1="650.70" x2="288.20" y2="661.00" stroke="#9c3c3c" stroke-width="1.1" />
<line x1="277.80" y1="661.00" x2="298.60" y2="661.00" stroke="#9c3c3c" stroke-width="1.1" />
<line x1="281.00" y1="664.60" x2="295.40" y2="664.60" stroke="#9c3c3c" stroke-width="1.1" />
<line x1="284.40" y1="668.00" x2="292.00" y2="668.00" stroke="#9c3c3c" stroke-width="1.1" />
<line x1="287.40" y1="671.00" x2="289.00" y2="671.00" stroke="#9c3c3c" stroke-width="1.0" />
<text x="281.00" y="680.30" font-size="8.64" fill="#8c3434" font-family="'Liberation Serif', serif" textLength="16.40" lengthAdjust="spacingAndGlyphs" stroke="#8c3434" stroke-width="0.22" >GND</text>
<line x1="330.20" y1="540.40" x2="355.50" y2="540.40" stroke="#303030" stroke-width="1.05" />
<line x1="355.50" y1="540.40" x2="428.90" y2="540.40" stroke="#2c2c74" stroke-width="1.15" />
<circle cx="428.90" cy="540.40" r="2.5" fill="#20205a"/>
<polyline points="428.90,486.60 428.90,568.40" fill="none" stroke="#2c2c74" stroke-width="1.15" stroke-linejoin="miter" stroke-linecap="square"/>
<text x="429.00" y="485.30" font-size="8.64" fill="#8c3434" font-family="'Liberation Serif', serif" textLength="17.00" lengthAdjust="spacingAndGlyphs" stroke="#8c3434" stroke-width="0.22" >clock</text>
<text x="358.00" y="519.30" font-size="8.64" fill="#34346e" font-family="'Liberation Serif', serif" textLength="10.00" lengthAdjust="spacingAndGlyphs" stroke="#34346e" stroke-width="0.22" >U3</text>
<text x="358.00" y="530.30" font-size="8.64" fill="#34346e" font-family="'Liberation Serif', serif" textLength="22.00" lengthAdjust="spacingAndGlyphs" stroke="#34346e" stroke-width="0.22" >NE555</text>
<path d="M419.2 568.4 L440 568.4 L429.6 577.5 Z" fill="#3030d0"/>
<line x1="419.20" y1="577.80" x2="440.00" y2="577.80" stroke="#3030d0" stroke-width="1.4" />
<line x1="428.90" y1="577.80" x2="428.90" y2="599.50" stroke="#303030" stroke-width="1.05" />
<g stroke="#3030d0" stroke-width="0.9"><path d="M443.2 578.2 L448 583"/><path d="M446.5 584 L451 588.8"/></g>
<path d="M448.5 583.5 L446 582 L448 580.5 Z" fill="#3030d0"/><path d="M451.5 589.2 L449 588 L451 586.3 Z" fill="#3030d0"/>
<text x="452.00" y="577.30" font-size="8.64" fill="#34346e" font-family="'Liberation Serif', serif" textLength="10.00" lengthAdjust="spacingAndGlyphs" stroke="#34346e" stroke-width="0.22" >D1</text>
<text x="452.00" y="587.80" font-size="8.64" fill="#34346e" font-family="'Liberation Serif', serif" textLength="19.70" lengthAdjust="spacingAndGlyphs" stroke="#34346e" stroke-width="0.22" >LED1</text>
<line x1="428.90" y1="599.50" x2="428.90" y2="611.70" stroke="#303030" stroke-width="1.05" />
<polyline points="428.90,611.70 430.80,612.92 427.00,615.35 430.80,617.78 427.00,620.22 430.80,622.65 427.00,625.08 428.90,626.30" fill="none" stroke="#3030d0" stroke-width="1.0" />
<line x1="428.90" y1="626.30" x2="428.90" y2="638.50" stroke="#303030" stroke-width="1.05" />
<polyline points="428.90,638.50 428.90,650.70" fill="none" stroke="#2c2c74" stroke-width="1.15" stroke-linejoin="miter" stroke-linecap="square"/>
<text x="432.00" y="618.80" font-size="8.64" fill="#34346e" font-family="'Liberation Serif', serif" textLength="12.80" lengthAdjust="spacingAndGlyphs" stroke="#34346e" stroke-width="0.22" >R11</text>
<text x="432.00" y="629.30" font-size="8.64" fill="#34346e" font-family="'Liberation Serif', serif" textLength="15.50" lengthAdjust="spacingAndGlyphs" stroke="#34346e" stroke-width="0.22" >Res1</text>
<text x="432.00" y="639.30" font-size="8.64" fill="#34346e" font-family="'Liberation Serif', serif" textLength="12.00" lengthAdjust="spacingAndGlyphs" stroke="#34346e" stroke-width="0.22" >150</text>
<line x1="687.70" y1="702.20" x2="990.00" y2="702.20" stroke="#2a2a2a" stroke-width="1.4" />
<line x1="687.70" y1="702.20" x2="687.70" y2="740.00" stroke="#2a2a2a" stroke-width="1.4" />
<line x1="687.70" y1="733.60" x2="990.00" y2="733.60" stroke="#2a2a2a" stroke-width="1.4" />
<line x1="739.30" y1="733.60" x2="739.30" y2="740.00" stroke="#2a2a2a" stroke-width="1.2" />
<line x1="945.50" y1="733.60" x2="945.50" y2="740.00" stroke="#2a2a2a" stroke-width="1.2" />
<text x="692.60" y="711.30" font-size="8.64" fill="#1c1c1c" font-family="'Liberation Serif', serif" textLength="16.00" lengthAdjust="spacingAndGlyphs" stroke="#1c1c1c" stroke-width="0.22" >Title</text>
<text x="0.00" y="0.00" font-size="8.64" fill="#1c1c1c" font-family="'Liberation Serif', serif" stroke="#1c1c1c" stroke-width="0.22"  transform="translate(692.00,741.80) scale(0.955,1)">Size</text>
<text x="0.00" y="0.00" font-size="8.64" fill="#1c1c1c" font-family="'Liberation Serif', serif" stroke="#1c1c1c" stroke-width="0.22"  transform="translate(742.00,741.80) scale(0.955,1)">Number</text>
<text x="0.00" y="0.00" font-size="8.64" fill="#1c1c1c" font-family="'Liberation Serif', serif" stroke="#1c1c1c" stroke-width="0.22"  transform="translate(948.00,741.80) scale(0.955,1)">Revision</text>
</g>
<rect x="989.00" y="83.00" width="13.50" height="655.50" fill="#f0f0f0"/>
<line x1="989.30" y1="83.00" x2="989.30" y2="738.50" stroke="#e4e4e4" stroke-width="0.8" />
<path d="M992 92 L998 92 L995 88.5 Z" fill="#303030"/>
<rect x="989.6" y="165.2" width="11.4" height="479.8" rx="1.5" fill="url(#gThumbV)" stroke="#a8a8a8" stroke-width="0.8"/>
<line x1="993.00" y1="402.00" x2="998.00" y2="402.00" stroke="#909090" stroke-width="0.8" />
<line x1="993.00" y1="404.00" x2="998.00" y2="404.00" stroke="#909090" stroke-width="0.8" />
<line x1="993.00" y1="406.00" x2="998.00" y2="406.00" stroke="#909090" stroke-width="0.8" />
<path d="M992 729.5 L998 729.5 L995 733 Z" fill="#303030"/>
<rect x="1002.50" y="59.20" width="21.50" height="709.00" fill="#efefef"/>
<rect x="1004.8" y="60.9" width="13.8" height="41.9" fill="#fafafa" stroke="#dcdcdc" stroke-width="0.8"/>
<text x="0" y="0" font-size="9.6" font-family="'Liberation Sans', sans-serif" fill="#404040" textLength="35" lengthAdjust="spacingAndGlyphs" transform="translate(1008.4,62.5) rotate(90)">Favorites</text>
<rect x="1004.8" y="106.7" width="13.8" height="40.0" fill="#fafafa" stroke="#dcdcdc" stroke-width="0.8"/>
<text x="0" y="0" font-size="9.6" font-family="'Liberation Sans', sans-serif" fill="#404040" textLength="34" lengthAdjust="spacingAndGlyphs" transform="translate(1008.4,108.3) rotate(90)">Clipboard</text>
<rect x="1004.8" y="150.6" width="13.8" height="39.0" fill="#fafafa" stroke="#dcdcdc" stroke-width="0.8"/>
<text x="0" y="0" font-size="9.6" font-family="'Liberation Sans', sans-serif" fill="#404040" textLength="33.5" lengthAdjust="spacingAndGlyphs" transform="translate(1008.4,152.2) rotate(90)">Libraries</text>
<rect x="0.00" y="738.50" width="989.00" height="13.50" fill="#f0f0f0"/>
<line x1="0.00" y1="738.60" x2="989.00" y2="738.60" stroke="#e0e0e0" stroke-width="0.8" />
<path d="M8 742 L8 748 L4.5 745 Z" fill="#404040"/>
<rect x="15" y="739.3" width="846.7" height="11.8" rx="2" fill="url(#gThumbH)" stroke="#a8a8a8" stroke-width="0.8"/>
<line x1="434.50" y1="742.00" x2="434.50" y2="748.00" stroke="#909090" stroke-width="0.8" />
<line x1="436.50" y1="742.00" x2="436.50" y2="748.00" stroke="#909090" stroke-width="0.8" />
<line x1="438.50" y1="742.00" x2="438.50" y2="748.00" stroke="#909090" stroke-width="0.8" />
<path d="M979 742 L979 748 L982.5 745 Z" fill="#404040"/>
<rect x="0.00" y="752.00" width="1024.00" height="15.80" fill="#f0f0f0"/>
<line x1="0.00" y1="768.30" x2="1024.00" y2="768.30" stroke="#a0a0a0" stroke-width="1.1" />
<line x1="0.00" y1="751.80" x2="989.00" y2="751.80" stroke="#d8d8d8" stroke-width="0.8" />
<path d="M6.5 752.5 L46.9 752.5 L43 767.3 L10 767.3 Z" fill="#ffffff" stroke="#808080" stroke-width="0.9"/>
<text x="12.50" y="763.00" font-size="10" fill="#101010" font-family="'Liberation Sans', sans-serif" font-weight="bold" textLength="25.80" lengthAdjust="spacingAndGlyphs">Editor</text>
<rect x="870.9" y="753.5" width="23.1" height="13.5" fill="#ececec" stroke="#d4d4d4" stroke-width="0.8"/>
<rect x="895.3" y="753.5" width="25.7" height="13.5" fill="#ececec" stroke="#d4d4d4" stroke-width="0.8"/>
<rect x="922.4" y="753.5" width="50.3" height="13.5" fill="#ececec" stroke="#d4d4d4" stroke-width="0.8"/>
<rect x="974.0" y="753.5" width="27.0" height="13.5" fill="#ececec" stroke="#d4d4d4" stroke-width="0.8"/>
<g transform="translate(875,754)"><path d="M4 9 L11 2 L13 4 L6 11 Z" fill="#e8e8f0" stroke="#7070a0" stroke-width="0.8"/><rect x="1" y="11.5" width="5" height="2" fill="#6060d8"/><rect x="9" y="11.5" width="5" height="2" fill="#6060d8"/></g>
<g transform="translate(897,754)"><circle cx="3" cy="4" r="2" fill="none" stroke="#a09020" stroke-width="1"/><circle cx="3" cy="9" r="2" fill="none" stroke="#a09020" stroke-width="1"/><path d="M7 4 L11 7 L7 10 Z" fill="#404040"/><path d="M12 3 L20 3 L16 8 L16 11 Z" fill="none" stroke="#404040" stroke-width="1.2"/></g>
<text x="926.00" y="763.60" font-size="10" fill="#505050" font-family="'Liberation Sans', sans-serif" textLength="44.00" lengthAdjust="spacingAndGlyphs">Mask Level</text>
<text x="978.00" y="763.60" font-size="10" fill="#505050" font-family="'Liberation Sans', sans-serif" textLength="18.70" lengthAdjust="spacingAndGlyphs">Clear</text>
<rect x="0.00" y="768.80" width="1024.00" height="18.70" fill="#f0f0f0"/>
<line x1="0.00" y1="769.20" x2="1024.00" y2="769.20" stroke="#f8f8f8" stroke-width="0.8" />
<text x="3.40" y="781.00" font-size="10" fill="#1e1e1e" font-family="'Liberation Sans', sans-serif" textLength="47.40" lengthAdjust="spacingAndGlyphs">X:380 Y:410</text>
<text x="61.00" y="781.00" font-size="10" fill="#1e1e1e" font-family="'Liberation Sans', sans-serif" textLength="27.30" lengthAdjust="spacingAndGlyphs">Grid:10</text>
<line x1="521.50" y1="770.00" x2="521.50" y2="786.00" stroke="#a8a8a8" stroke-width="0.9" />
<line x1="523.00" y1="770.00" x2="523.00" y2="786.00" stroke="#ffffff" stroke-width="0.9" />
<rect x="769.0" y="770.8" width="37.4" height="14.2" fill="#f4f4f4" stroke="#d8d8d8" stroke-width="0.8"/>
<text x="774.00" y="781.30" font-size="10" fill="#404040" font-family="'Liberation Sans', sans-serif" textLength="28.50" lengthAdjust="spacingAndGlyphs">System</text>
<line x1="774.00" y1="783.20" x2="780.00" y2="783.20" stroke="#505050" stroke-width="0.8" />
<rect x="807.7" y="770.8" width="70.9" height="14.2" fill="#f4f4f4" stroke="#d8d8d8" stroke-width="0.8"/>
<text x="812.80" y="781.30" font-size="10" fill="#404040" font-family="'Liberation Sans', sans-serif" textLength="60.60" lengthAdjust="spacingAndGlyphs">Design Compiler</text>
<line x1="812.80" y1="783.20" x2="819.00" y2="783.20" stroke="#505050" stroke-width="0.8" />
<rect x="879.9" y="770.8" width="33.5" height="14.2" fill="#f4f4f4" stroke="#d8d8d8" stroke-width="0.8"/>
<text x="887.60" y="781.30" font-size="10" fill="#404040" font-family="'Liberation Sans', sans-serif" textLength="16.80" lengthAdjust="spacingAndGlyphs">SCH</text>
<line x1="893.00" y1="783.20" x2="899.00" y2="783.20" stroke="#505050" stroke-width="0.8" />
<rect x="914.7" y="770.8" width="32.3" height="14.2" fill="#f4f4f4" stroke="#d8d8d8" stroke-width="0.8"/>
<text x="921.00" y="781.30" font-size="10" fill="#404040" font-family="'Liberation Sans', sans-serif" textLength="18.00" lengthAdjust="spacingAndGlyphs">Help</text>
<line x1="921.00" y1="783.20" x2="927.00" y2="783.20" stroke="#505050" stroke-width="0.8" />
<rect x="948.2" y="770.8" width="54.1" height="14.2" fill="#f4f4f4" stroke="#d8d8d8" stroke-width="0.8"/>
<text x="953.30" y="781.30" font-size="10" fill="#404040" font-family="'Liberation Sans', sans-serif" textLength="43.90" lengthAdjust="spacingAndGlyphs">Instruments</text>
<line x1="953.30" y1="783.20" x2="955.50" y2="783.20" stroke="#505050" stroke-width="0.8" />
<rect x="1006.0" y="770.8" width="15.7" height="14.2" fill="#f4f4f4" stroke="#d8d8d8" stroke-width="0.8"/>
<text x="1009.00" y="781.30" font-size="10" fill="#404040" font-family="'Liberation Sans', sans-serif" textLength="10.00" lengthAdjust="spacingAndGlyphs">&gt;&gt;</text>
<rect x="0.00" y="787.50" width="1024.00" height="31.50" fill="url(#gTask)"/>
<rect x="0.00" y="787.50" width="1024.00" height="31.50" fill="url(#gTaskV)"/>
<line x1="0.00" y1="787.80" x2="1024.00" y2="787.80" stroke="#1a3a5a" stroke-width="1.2" />
<line x1="0.00" y1="789.00" x2="1024.00" y2="789.00" stroke="#7fb0d8" stroke-width="0.6" opacity="0.6"/>
<path d="M795 787.5 L812 787.5 L850 819 L833 819 Z" fill="#ffffff" opacity="0.22"/><path d="M780 787.5 L795 787.5 L833 819 L818 819 Z" fill="#ffffff" opacity="0.08"/>
<circle cx="21.5" cy="803.2" r="14.8" fill="url(#gOrb)" stroke="#a8d0e8" stroke-width="1" stroke-opacity="0.7"/>
<path d="M7.5 801 Q21.5 796 35.5 801 Q35 789.5 21.5 788.8 Q8 789.5 7.5 801 Z" fill="url(#gOrbTop)"/>
<g transform="translate(14.5,794.5)"><path d="M0.5 2 Q3.5 0.5 7 2 L6.3 7.5 Q3 6.3 -0.3 7.5 Z" fill="#f05a20"/><path d="M7.8 2.3 Q11 3.8 14.5 2.6 L13.8 8.3 Q10.8 9 7 7.8 Z" fill="#8ac040"/><path d="M-0.4 8.4 Q3 7.2 6.2 8.4 L5.5 14 Q2.5 12.8 -1.2 14 Z" fill="#40b0f0"/><path d="M6.9 8.8 Q10.3 10 13.7 9.2 L13 15 Q9.8 15.8 6.2 14.4 Z" fill="#f8c830"/></g>
<g transform="translate(58,790)"><circle cx="14.5" cy="13" r="8.5" fill="none" stroke="url(#gIE)" stroke-width="4.5"/><path d="M7 13 L22 13" stroke="#2a80d8" stroke-width="2.6"/><path d="M18 17 L23.5 17" stroke="#3a8ed8" stroke-width="0" /><path d="M3.5 23.5 Q2 16 9 8 Q16 1 23 2" fill="none" stroke="#f0c040" stroke-width="3"/><path d="M4 23 Q3 16 9.5 8.5" fill="none" stroke="#e09020" stroke-width="1.2"/></g>
<rect x="97.9" y="788.2" width="46.1" height="30" rx="2" fill="url(#gTaskBtn)" stroke="#a8d0f0" stroke-opacity="0.55" stroke-width="1"/>
<rect x="196.8" y="788.2" width="46.1" height="30" rx="2" fill="url(#gTaskBtn)" stroke="#a8d0f0" stroke-opacity="0.55" stroke-width="1"/>
<rect x="246.0" y="788.2" width="47.0" height="30" rx="2" fill="url(#gTaskBtn)" stroke="#a8d0f0" stroke-opacity="0.55" stroke-width="1"/>
<rect x="295.6" y="788.2" width="46.2" height="30" rx="2" fill="url(#gTaskBtn)" stroke="#a8d0f0" stroke-opacity="0.55" stroke-width="1"/>
<g transform="translate(106,791)"><path d="M1 5 L10 5 L12 3 L26 3 L26 24 L1 24 Z" fill="#d8b048"/><rect x="3" y="6" width="21" height="6" fill="#fff8e0"/><path d="M1 11 L27 11 L26 24 L1 24 Z" fill="#f4d470"/><rect x="5" y="16" width="17" height="7" fill="#7ab0d8"/><rect x="7" y="18" width="13" height="3" fill="#c8e4f4"/></g>
<g transform="translate(159,792)"><rect x="0" y="1" width="21" height="22" rx="2" fill="#c8dcec" opacity="0.8"/><circle cx="10" cy="12" r="7.5" fill="#f07020"/><circle cx="10" cy="12" r="5.5" fill="#f89040"/><path d="M7.5 8 L14 12 L7.5 16 Z" fill="#ffffff"/></g>
<g transform="translate(206,790)"><circle cx="13.5" cy="13.5" r="11.5" fill="#2a5aa8"/><circle cx="14.5" cy="11.5" r="7" fill="#5a90d8"/><path d="M2.5 9 Q1 20 9 25 Q18 28 24 21 Q27 15 24 9 Q25 17 17 19 Q9 19 8.5 12.5 Q8.5 7 13 5 Q6 4 2.5 9 Z" fill="#e86818"/><path d="M13 2 Q22 1.5 25 9 Q20 4 15 5.5 Z" fill="#f8a830"/><path d="M4 20 Q9 26 16 25" stroke="#c04a10" stroke-width="1.5" fill="none"/></g>
<g transform="translate(255,790)"><path d="M2 14 L14 20 L26 13 L26 18 L14 25 L2 19 Z" fill="#e8ecf0"/><path d="M3 9 L15 3 L26 8 L14 15 Z" fill="#282c34"/><path d="M3 9 L14 15 L14 20 L3 14 Z" fill="#4a5058"/><path d="M14 15 L26 8 L26 13 L14 20 Z" fill="#383c44"/><path d="M10 8 L15 5.5 L19 7.5 L14 10 Z" fill="#e88860"/></g>
<g transform="translate(308,791)"><rect x="0" y="0" width="23" height="24" fill="#4a5ac0"/><rect x="2" y="2" width="19" height="20" fill="#f8f8fc"/><path d="M3 21 Q13 14 21 4 L21 10 Q14 17 8 21 Z" fill="#f0a020"/><path d="M3 14 Q9 6 18 3" stroke="#90a0d8" stroke-width="1.4" fill="none"/></g>
<text x="837.00" y="804.50" font-size="10.5" fill="#ffffff" font-family="'Liberation Sans', sans-serif" textLength="13.30" lengthAdjust="spacingAndGlyphs">EN</text>
<path d="M862.5 803 L868.5 803 L865.5 799.8 Z" fill="#ffffff"/>
<g transform="translate(880,795)"><path d="M1 0 L1 14" stroke="#e0e0e0" stroke-width="1.2"/><path d="M1.5 1 L9 1 L7 4.5 L9 8 L1.5 8 Z" fill="#f0f0f0"/><circle cx="9" cy="10" r="3.5" fill="#e02020"/><path d="M7.5 8.5 L10.5 11.5 M10.5 8.5 L7.5 11.5" stroke="#fff" stroke-width="0.9"/></g>
<g transform="translate(898,795)"><ellipse cx="6" cy="6.5" rx="6" ry="5" fill="#40a040"/><path d="M0 7 Q6 2 12 4 Q8 9 2 10 Z" fill="#e8c020"/><ellipse cx="7" cy="5" rx="3" ry="2.5" fill="#3070d0"/></g>
<g transform="translate(918,795)"><rect x="2" y="4" width="10" height="8" fill="#d8d8d8" stroke="#404040" stroke-width="0.8"/><rect x="3.5" y="5.5" width="7" height="5" fill="#303030"/><rect x="0" y="1" width="4" height="4" fill="#e8e8e8"/><path d="M5 13 L9 13" stroke="#d0d0d0" stroke-width="1.2"/></g>
<g transform="translate(937,795)"><path d="M0 4 L3 4 L7 1 L7 13 L3 10 L0 10 Z" fill="#e8e8e8"/><path d="M9 4 Q11 7 9 10 M11 2.5 Q14 7 11 11.5" stroke="#e0e0e0" stroke-width="1" fill="none"/></g>
<text x="964.00" y="801.50" font-size="10.5" fill="#ffffff" font-family="'Liberation Sans', sans-serif" textLength="39.50" lengthAdjust="spacingAndGlyphs">10:23 AM</text>
<text x="965.00" y="813.60" font-size="10.5" fill="#ffffff" font-family="'Liberation Sans', sans-serif" textLength="37.40" lengthAdjust="spacingAndGlyphs">5/3/2012</text>
<rect x="1013" y="788" width="11" height="31" fill="#3a6aa8" stroke="#9ab8d8" stroke-opacity="0.5" stroke-width="1"/>
</g>
</svg></body></html>
